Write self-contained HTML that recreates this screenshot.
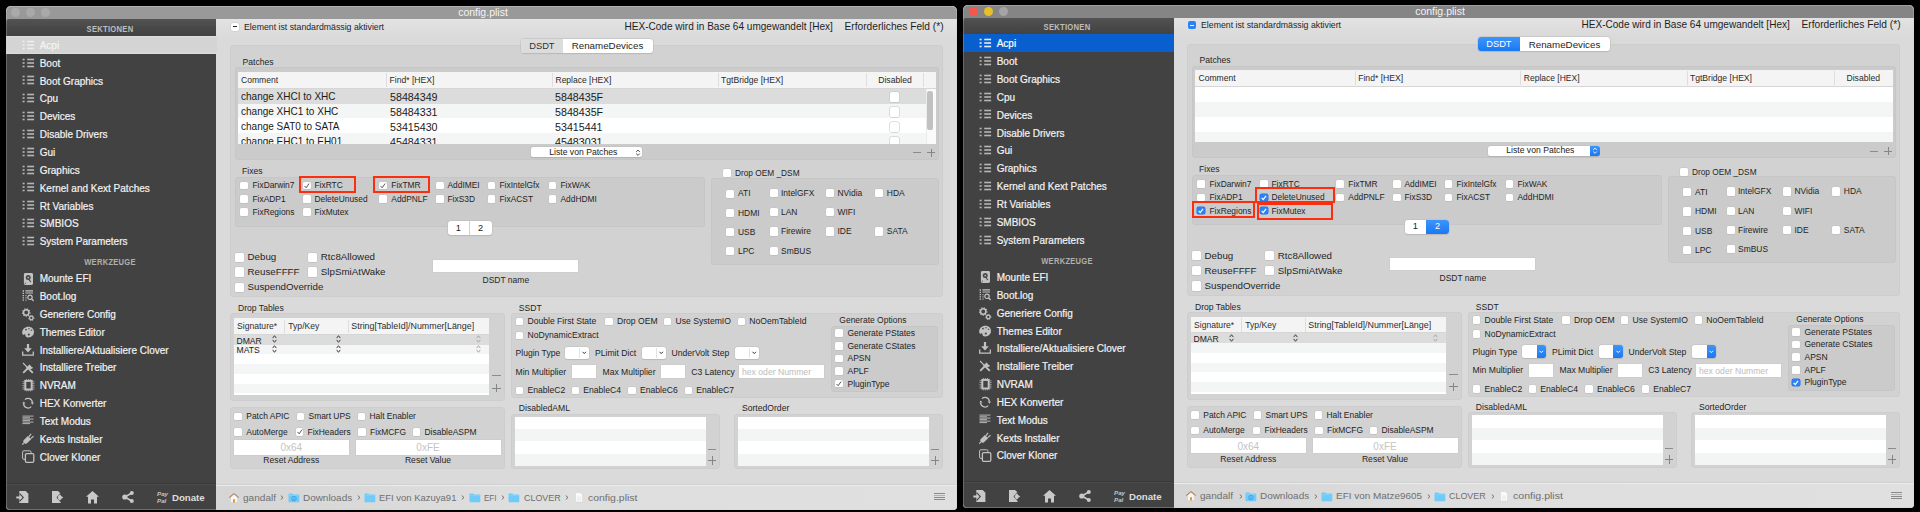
<!DOCTYPE html><html><head><meta charset="utf-8"><style>html,body{margin:0;padding:0;background:#000;width:1920px;height:512px;overflow:hidden;font-family:'Liberation Sans', sans-serif;} .w{position:absolute;left:0;top:0;width:1920px;height:512px;}</style></head><body>
<div class="w"><div style="position:absolute;left:6.00px;top:6.00px;width:951.00px;height:503.50px;background:#dadada;border-radius:5px 5px 4px 4px;"></div><div style="position:absolute;left:6.00px;top:6.00px;width:951.00px;height:18.00px;background:#999999;border-radius:5px 5px 0 0;box-shadow:inset 0 1px 0 rgba(255,255,255,0.22);"></div><div style="position:absolute;left:216.00px;top:19.20px;width:741.00px;height:18.80px;background:linear-gradient(#e3e3e3,#dadada);"></div><div style="position:absolute;left:11.00px;top:7.90px;width:9.20px;height:9.20px;background:#a9a9a9;border-radius:50%;"></div><div style="position:absolute;left:26.00px;top:7.90px;width:9.20px;height:9.20px;background:#a9a9a9;border-radius:50%;"></div><div style="position:absolute;left:41.00px;top:7.90px;width:9.20px;height:9.20px;background:#a9a9a9;border-radius:50%;"></div><div style="position:absolute;left:183.30px;width:600px;text-align:center;top:8.32px;font-size:10.4px;line-height:10.4px;color:#f4f4f4;font-weight:normal;white-space:pre;transform:scaleX(1.0115);transform-origin:50% 0;">config.plist</div><div style="position:absolute;left:6.00px;top:19.00px;width:210.00px;height:490.50px;background:linear-gradient(#535353 0px,#484848 9px,#424242 17px);border-radius:3px 0 0 4px;"></div><div style="position:absolute;left:-189.70px;width:600px;text-align:center;top:24.90px;font-size:8.4px;line-height:8.4px;color:#bdbdbd;font-weight:bold;white-space:pre;transform:scaleX(0.9090);transform-origin:50% 0;letter-spacing:0.3px;">SEKTIONEN</div><div style="position:absolute;left:6.00px;top:35.90px;width:210.50px;height:17.80px;background:#d4d4d4;border-top:1px solid #dedede;border-bottom:1px solid #dcdcdc;box-sizing:border-box;"></div><svg style="position:absolute;left:22.00px;top:39.65px;overflow:visible" width="13" height="9" viewBox="0 0 13 9"><rect x="0.6" y="0.70" width="2" height="1.6" fill="#ededed"/><rect x="5.2" y="0.70" width="6.9" height="1.6" fill="#ededed"/><rect x="0.6" y="4.20" width="2" height="1.6" fill="#ededed"/><rect x="5.2" y="4.20" width="6.9" height="1.6" fill="#ededed"/><rect x="0.6" y="7.70" width="2" height="1.6" fill="#ededed"/><rect x="5.2" y="7.70" width="6.9" height="1.6" fill="#ededed"/></svg><div style="position:absolute;left:39.70px;top:40.87px;font-size:10px;line-height:10px;color:#f4f4f4;font-weight:normal;white-space:pre;-webkit-text-stroke:0.2px #f4f4f4;">Acpi</div><svg style="position:absolute;left:22.00px;top:57.50px;overflow:visible" width="13" height="9" viewBox="0 0 13 9"><rect x="0.6" y="0.70" width="2" height="1.6" fill="#b6b6b6"/><rect x="5.2" y="0.70" width="6.9" height="1.6" fill="#b6b6b6"/><rect x="0.6" y="4.20" width="2" height="1.6" fill="#b6b6b6"/><rect x="5.2" y="4.20" width="6.9" height="1.6" fill="#b6b6b6"/><rect x="0.6" y="7.70" width="2" height="1.6" fill="#b6b6b6"/><rect x="5.2" y="7.70" width="6.9" height="1.6" fill="#b6b6b6"/></svg><div style="position:absolute;left:39.70px;top:58.72px;font-size:10px;line-height:10px;color:#f2f2f2;font-weight:normal;white-space:pre;-webkit-text-stroke:0.2px #f2f2f2;">Boot</div><svg style="position:absolute;left:22.00px;top:75.35px;overflow:visible" width="13" height="9" viewBox="0 0 13 9"><rect x="0.6" y="0.70" width="2" height="1.6" fill="#b6b6b6"/><rect x="5.2" y="0.70" width="6.9" height="1.6" fill="#b6b6b6"/><rect x="0.6" y="4.20" width="2" height="1.6" fill="#b6b6b6"/><rect x="5.2" y="4.20" width="6.9" height="1.6" fill="#b6b6b6"/><rect x="0.6" y="7.70" width="2" height="1.6" fill="#b6b6b6"/><rect x="5.2" y="7.70" width="6.9" height="1.6" fill="#b6b6b6"/></svg><div style="position:absolute;left:39.70px;top:76.56px;font-size:10px;line-height:10px;color:#f2f2f2;font-weight:normal;white-space:pre;-webkit-text-stroke:0.2px #f2f2f2;">Boot Graphics</div><svg style="position:absolute;left:22.00px;top:93.20px;overflow:visible" width="13" height="9" viewBox="0 0 13 9"><rect x="0.6" y="0.70" width="2" height="1.6" fill="#b6b6b6"/><rect x="5.2" y="0.70" width="6.9" height="1.6" fill="#b6b6b6"/><rect x="0.6" y="4.20" width="2" height="1.6" fill="#b6b6b6"/><rect x="5.2" y="4.20" width="6.9" height="1.6" fill="#b6b6b6"/><rect x="0.6" y="7.70" width="2" height="1.6" fill="#b6b6b6"/><rect x="5.2" y="7.70" width="6.9" height="1.6" fill="#b6b6b6"/></svg><div style="position:absolute;left:39.70px;top:94.42px;font-size:10px;line-height:10px;color:#f2f2f2;font-weight:normal;white-space:pre;-webkit-text-stroke:0.2px #f2f2f2;">Cpu</div><svg style="position:absolute;left:22.00px;top:111.05px;overflow:visible" width="13" height="9" viewBox="0 0 13 9"><rect x="0.6" y="0.70" width="2" height="1.6" fill="#b6b6b6"/><rect x="5.2" y="0.70" width="6.9" height="1.6" fill="#b6b6b6"/><rect x="0.6" y="4.20" width="2" height="1.6" fill="#b6b6b6"/><rect x="5.2" y="4.20" width="6.9" height="1.6" fill="#b6b6b6"/><rect x="0.6" y="7.70" width="2" height="1.6" fill="#b6b6b6"/><rect x="5.2" y="7.70" width="6.9" height="1.6" fill="#b6b6b6"/></svg><div style="position:absolute;left:39.70px;top:112.27px;font-size:10px;line-height:10px;color:#f2f2f2;font-weight:normal;white-space:pre;-webkit-text-stroke:0.2px #f2f2f2;">Devices</div><svg style="position:absolute;left:22.00px;top:128.90px;overflow:visible" width="13" height="9" viewBox="0 0 13 9"><rect x="0.6" y="0.70" width="2" height="1.6" fill="#b6b6b6"/><rect x="5.2" y="0.70" width="6.9" height="1.6" fill="#b6b6b6"/><rect x="0.6" y="4.20" width="2" height="1.6" fill="#b6b6b6"/><rect x="5.2" y="4.20" width="6.9" height="1.6" fill="#b6b6b6"/><rect x="0.6" y="7.70" width="2" height="1.6" fill="#b6b6b6"/><rect x="5.2" y="7.70" width="6.9" height="1.6" fill="#b6b6b6"/></svg><div style="position:absolute;left:39.70px;top:130.12px;font-size:10px;line-height:10px;color:#f2f2f2;font-weight:normal;white-space:pre;-webkit-text-stroke:0.2px #f2f2f2;">Disable Drivers</div><svg style="position:absolute;left:22.00px;top:146.75px;overflow:visible" width="13" height="9" viewBox="0 0 13 9"><rect x="0.6" y="0.70" width="2" height="1.6" fill="#b6b6b6"/><rect x="5.2" y="0.70" width="6.9" height="1.6" fill="#b6b6b6"/><rect x="0.6" y="4.20" width="2" height="1.6" fill="#b6b6b6"/><rect x="5.2" y="4.20" width="6.9" height="1.6" fill="#b6b6b6"/><rect x="0.6" y="7.70" width="2" height="1.6" fill="#b6b6b6"/><rect x="5.2" y="7.70" width="6.9" height="1.6" fill="#b6b6b6"/></svg><div style="position:absolute;left:39.70px;top:147.97px;font-size:10px;line-height:10px;color:#f2f2f2;font-weight:normal;white-space:pre;-webkit-text-stroke:0.2px #f2f2f2;">Gui</div><svg style="position:absolute;left:22.00px;top:164.60px;overflow:visible" width="13" height="9" viewBox="0 0 13 9"><rect x="0.6" y="0.70" width="2" height="1.6" fill="#b6b6b6"/><rect x="5.2" y="0.70" width="6.9" height="1.6" fill="#b6b6b6"/><rect x="0.6" y="4.20" width="2" height="1.6" fill="#b6b6b6"/><rect x="5.2" y="4.20" width="6.9" height="1.6" fill="#b6b6b6"/><rect x="0.6" y="7.70" width="2" height="1.6" fill="#b6b6b6"/><rect x="5.2" y="7.70" width="6.9" height="1.6" fill="#b6b6b6"/></svg><div style="position:absolute;left:39.70px;top:165.82px;font-size:10px;line-height:10px;color:#f2f2f2;font-weight:normal;white-space:pre;-webkit-text-stroke:0.2px #f2f2f2;">Graphics</div><svg style="position:absolute;left:22.00px;top:182.45px;overflow:visible" width="13" height="9" viewBox="0 0 13 9"><rect x="0.6" y="0.70" width="2" height="1.6" fill="#b6b6b6"/><rect x="5.2" y="0.70" width="6.9" height="1.6" fill="#b6b6b6"/><rect x="0.6" y="4.20" width="2" height="1.6" fill="#b6b6b6"/><rect x="5.2" y="4.20" width="6.9" height="1.6" fill="#b6b6b6"/><rect x="0.6" y="7.70" width="2" height="1.6" fill="#b6b6b6"/><rect x="5.2" y="7.70" width="6.9" height="1.6" fill="#b6b6b6"/></svg><div style="position:absolute;left:39.70px;top:183.67px;font-size:10px;line-height:10px;color:#f2f2f2;font-weight:normal;white-space:pre;-webkit-text-stroke:0.2px #f2f2f2;">Kernel and Kext Patches</div><svg style="position:absolute;left:22.00px;top:200.30px;overflow:visible" width="13" height="9" viewBox="0 0 13 9"><rect x="0.6" y="0.70" width="2" height="1.6" fill="#b6b6b6"/><rect x="5.2" y="0.70" width="6.9" height="1.6" fill="#b6b6b6"/><rect x="0.6" y="4.20" width="2" height="1.6" fill="#b6b6b6"/><rect x="5.2" y="4.20" width="6.9" height="1.6" fill="#b6b6b6"/><rect x="0.6" y="7.70" width="2" height="1.6" fill="#b6b6b6"/><rect x="5.2" y="7.70" width="6.9" height="1.6" fill="#b6b6b6"/></svg><div style="position:absolute;left:39.70px;top:201.52px;font-size:10px;line-height:10px;color:#f2f2f2;font-weight:normal;white-space:pre;-webkit-text-stroke:0.2px #f2f2f2;">Rt Variables</div><svg style="position:absolute;left:22.00px;top:218.15px;overflow:visible" width="13" height="9" viewBox="0 0 13 9"><rect x="0.6" y="0.70" width="2" height="1.6" fill="#b6b6b6"/><rect x="5.2" y="0.70" width="6.9" height="1.6" fill="#b6b6b6"/><rect x="0.6" y="4.20" width="2" height="1.6" fill="#b6b6b6"/><rect x="5.2" y="4.20" width="6.9" height="1.6" fill="#b6b6b6"/><rect x="0.6" y="7.70" width="2" height="1.6" fill="#b6b6b6"/><rect x="5.2" y="7.70" width="6.9" height="1.6" fill="#b6b6b6"/></svg><div style="position:absolute;left:39.70px;top:219.37px;font-size:10px;line-height:10px;color:#f2f2f2;font-weight:normal;white-space:pre;-webkit-text-stroke:0.2px #f2f2f2;">SMBIOS</div><svg style="position:absolute;left:22.00px;top:236.00px;overflow:visible" width="13" height="9" viewBox="0 0 13 9"><rect x="0.6" y="0.70" width="2" height="1.6" fill="#b6b6b6"/><rect x="5.2" y="0.70" width="6.9" height="1.6" fill="#b6b6b6"/><rect x="0.6" y="4.20" width="2" height="1.6" fill="#b6b6b6"/><rect x="5.2" y="4.20" width="6.9" height="1.6" fill="#b6b6b6"/><rect x="0.6" y="7.70" width="2" height="1.6" fill="#b6b6b6"/><rect x="5.2" y="7.70" width="6.9" height="1.6" fill="#b6b6b6"/></svg><div style="position:absolute;left:39.70px;top:237.22px;font-size:10px;line-height:10px;color:#f2f2f2;font-weight:normal;white-space:pre;-webkit-text-stroke:0.2px #f2f2f2;">System Parameters</div><div style="position:absolute;left:-189.70px;width:600px;text-align:center;top:258.10px;font-size:8.4px;line-height:8.4px;color:#b0b0b0;font-weight:bold;white-space:pre;transform:scaleX(0.9031);transform-origin:50% 0;letter-spacing:0.3px;">WERKZEUGE</div><svg style="position:absolute;left:22.00px;top:272.50px;overflow:visible" width="12" height="12" viewBox="0 0 12 12"><rect x="1.9" y="0" width="9.1" height="11.9" rx="1.4" fill="#c2c2c2"/><circle cx="6.2" cy="4.6" r="2.5" fill="#4a4a4a"/><circle cx="6.2" cy="4.6" r="0.8" fill="#c2c2c2"/><path d="M6.6 6L8.8 9" stroke="#4a4a4a" stroke-width="1.2"/><rect x="2.9" y="9.7" width="1" height="1" fill="#4a4a4a"/></svg><div style="position:absolute;left:39.70px;top:274.37px;font-size:10px;line-height:10px;color:#f2f2f2;font-weight:normal;white-space:pre;-webkit-text-stroke:0.2px #f2f2f2;">Mounte EFI</div><svg style="position:absolute;left:22.00px;top:290.32px;overflow:visible" width="12" height="12" viewBox="0 0 12 12"><path d="M0.6 1h1.4M0.6 3.3h1.4M0.6 5.6h1.4M0.6 7.9h1.4M0.6 10.2h1.4" stroke="#c2c2c2" stroke-width="1.3"/><path d="M3.4 0.9h7.6M3.4 3h7.6" stroke="#c2c2c2" stroke-width="1.1"/><path d="M3.5 5.6h1M3.5 7.9h1M3.5 10.2h1" stroke="#c2c2c2" stroke-width="1.2"/><circle cx="8" cy="7.3" r="2.2" fill="none" stroke="#c2c2c2" stroke-width="1.2"/><path d="M9.6 8.9L11.6 11" stroke="#c2c2c2" stroke-width="1.3"/></svg><div style="position:absolute;left:39.70px;top:292.19px;font-size:10px;line-height:10px;color:#f2f2f2;font-weight:normal;white-space:pre;-webkit-text-stroke:0.2px #f2f2f2;">Boot.log</div><svg style="position:absolute;left:22.00px;top:308.15px;overflow:visible" width="12" height="12" viewBox="0 0 12 12"><circle cx="4.2" cy="4.5" r="2.7" fill="none" stroke="#c2c2c2" stroke-width="1.5"/><circle cx="4.2" cy="4.5" r="3.7" fill="none" stroke="#c2c2c2" stroke-width="1.1" stroke-dasharray="1.2 1.3"/><circle cx="9.3" cy="10" r="1.8" fill="none" stroke="#c2c2c2" stroke-width="1.3"/><circle cx="9.3" cy="10" r="2.6" fill="none" stroke="#c2c2c2" stroke-width="0.9" stroke-dasharray="1.1 1.1"/></svg><div style="position:absolute;left:39.70px;top:310.01px;font-size:10px;line-height:10px;color:#f2f2f2;font-weight:normal;white-space:pre;-webkit-text-stroke:0.2px #f2f2f2;">Generiere Config</div><svg style="position:absolute;left:22.00px;top:325.98px;overflow:visible" width="12" height="12" viewBox="0 0 12 12"><path d="M6.5 0.8C3 0.8 0.2 3.2 0.2 6.4C0.2 8.6 1.2 9.2 2.2 8.6C3.2 8 3.3 8.6 3.4 9.6C3.6 11 4.8 11.6 6.3 11.5C9.6 11.3 12 9.1 12 6C12 3 9.6 0.8 6.5 0.8Z" fill="#c2c2c2"/><circle cx="4" cy="3.6" r="0.9" fill="#4a4a4a"/><circle cx="7" cy="2.8" r="0.8" fill="#5a5a5a"/><circle cx="9.5" cy="4.2" r="0.8" fill="#5a5a5a"/><circle cx="6.8" cy="8.6" r="1.1" fill="#4a4a4a"/></svg><div style="position:absolute;left:39.70px;top:327.84px;font-size:10px;line-height:10px;color:#f2f2f2;font-weight:normal;white-space:pre;-webkit-text-stroke:0.2px #f2f2f2;">Themes Editor</div><svg style="position:absolute;left:22.00px;top:343.80px;overflow:visible" width="12" height="12" viewBox="0 0 12 12"><path d="M4.9 0h2.2v4.3h2.7L6 8.4L2.2 4.3h2.7Z" fill="#c2c2c2"/><path d="M0.7 7.6v3.5h10.6v-3.5" fill="none" stroke="#c2c2c2" stroke-width="1.3"/></svg><div style="position:absolute;left:39.70px;top:345.67px;font-size:10px;line-height:10px;color:#f2f2f2;font-weight:normal;white-space:pre;-webkit-text-stroke:0.2px #f2f2f2;">Installiere/Aktualisiere Clover</div><svg style="position:absolute;left:22.00px;top:361.62px;overflow:visible" width="12" height="12" viewBox="0 0 12 12"><path d="M1 1L4.6 4.6" stroke="#c2c2c2" stroke-width="1.1"/><path d="M4.3 4.3L10.8 10.8" stroke="#c2c2c2" stroke-width="1.9"/><path d="M1.2 10.8L8 4" stroke="#c2c2c2" stroke-width="1.8"/><path d="M7.2 2.4A2.6 2.6 0 1 0 11.1 5.6L9.6 5L8.6 3.6Z" fill="#c2c2c2"/></svg><div style="position:absolute;left:39.70px;top:363.49px;font-size:10px;line-height:10px;color:#f2f2f2;font-weight:normal;white-space:pre;-webkit-text-stroke:0.2px #f2f2f2;">Installiere Treiber</div><svg style="position:absolute;left:22.00px;top:379.45px;overflow:visible" width="12" height="12" viewBox="0 0 12 12"><rect x="3.3" y="1.9" width="6.4" height="8.6" fill="none" stroke="#c2c2c2" stroke-width="2"/><path d="M0.5 2.8h2M0.5 4.6h2M0.5 6.4h2M0.5 8.2h2M0.5 10h2M10.5 2.8h2M10.5 4.6h2M10.5 6.4h2M10.5 8.2h2M10.5 10h2M4.5 0v1M6.5 0v1M8.5 0v1M4.5 11.4v1M6.5 11.4v1M8.5 11.4v1" stroke="#c2c2c2" stroke-width="0.7"/></svg><div style="position:absolute;left:39.70px;top:381.31px;font-size:10px;line-height:10px;color:#f2f2f2;font-weight:normal;white-space:pre;-webkit-text-stroke:0.2px #f2f2f2;">NVRAM</div><svg style="position:absolute;left:22.00px;top:397.27px;overflow:visible" width="12" height="12" viewBox="0 0 12 12"><path d="M10.4 5.5A4.4 4.4 0 0 0 3 2.6M1.6 6.6A4.4 4.4 0 0 0 9.2 9.6" fill="none" stroke="#c2c2c2" stroke-width="1.3"/><path d="M0.2 6.6h3.3L1.8 4.4Z M12 5.6h-3.3L10.4 7.8Z" fill="#c2c2c2"/></svg><div style="position:absolute;left:39.70px;top:399.14px;font-size:10px;line-height:10px;color:#f2f2f2;font-weight:normal;white-space:pre;-webkit-text-stroke:0.2px #f2f2f2;">HEX Konverter</div><svg style="position:absolute;left:22.00px;top:415.10px;overflow:visible" width="12" height="12" viewBox="0 0 12 12"><path d="M0.5 1.1h11M0.5 2.8h7.5M0.5 4.1h11M0.5 5.6h7.5M0.5 7.1h11M0.5 8.6h7.5" stroke="#c2c2c2" stroke-width="0.9"/></svg><div style="position:absolute;left:39.70px;top:416.97px;font-size:10px;line-height:10px;color:#f2f2f2;font-weight:normal;white-space:pre;-webkit-text-stroke:0.2px #f2f2f2;">Text Modus</div><svg style="position:absolute;left:22.00px;top:432.92px;overflow:visible" width="12" height="12" viewBox="0 0 12 12"><path d="M1.6 7.3C1 8.2 1.2 9.4 2 10.1C2.8 10.9 4.1 10.9 5 10.2L9.2 6.2L5.9 2.9Z" fill="#c2c2c2"/><path d="M6.8 3.8L9.1 0.9M8.6 5.6L11.5 3.3M1.8 10L0.3 11.7" stroke="#c2c2c2" stroke-width="1.2"/></svg><div style="position:absolute;left:39.70px;top:434.79px;font-size:10px;line-height:10px;color:#f2f2f2;font-weight:normal;white-space:pre;-webkit-text-stroke:0.2px #f2f2f2;">Kexts Installer</div><svg style="position:absolute;left:22.00px;top:450.75px;overflow:visible" width="12" height="12" viewBox="0 0 12 12"><rect x="0.6" y="-0.2" width="8.4" height="8.6" rx="1.3" fill="none" stroke="#c2c2c2" stroke-width="1"/><rect x="3.4" y="2.6" width="8.4" height="8.8" rx="1.3" fill="#424242" stroke="#c2c2c2" stroke-width="1.3"/></svg><div style="position:absolute;left:39.70px;top:452.62px;font-size:10px;line-height:10px;color:#f2f2f2;font-weight:normal;white-space:pre;-webkit-text-stroke:0.2px #f2f2f2;">Clover Kloner</div><div style="position:absolute;left:6.00px;top:482.60px;width:210.00px;height:1.00px;background:#393939;"></div><div style="position:absolute;left:6.00px;top:483.60px;width:210.00px;height:0.80px;background:#4a4a4a;"></div><svg style="position:absolute;left:15.50px;top:491.20px;overflow:visible" width="13" height="12.5" viewBox="0 0 13 12.5"><path d="M3.3 0H9.7L12.4 2.8V11.9H3.3Z" fill="#c9c9c9"/><path d="M3.6 2.6L7.2 6.5L3.6 10.4" stroke="#424242" stroke-width="1.2" fill="none"/><path d="M0.3 6.5H5.2" stroke="#c9c9c9" stroke-width="2"/><path d="M4.2 4.2L6.4 6.5L4.2 8.8Z" fill="#c9c9c9"/></svg><svg style="position:absolute;left:52.00px;top:491.20px;overflow:visible" width="12" height="12.5" viewBox="0 0 12 12.5"><path d="M0 0H6L8.6 2.6V11.9H0Z" fill="#c9c9c9"/><path d="M8.9 2.4L5.3 6.5L8.9 10.6" stroke="#424242" stroke-width="1.2" fill="none"/><path d="M7.2 3.4L11.2 6.5L7.2 9.6L5.6 6.5Z" fill="#c9c9c9"/></svg><svg style="position:absolute;left:86.30px;top:491.00px;overflow:visible" width="13" height="12.5" viewBox="0 0 13 12.5"><path d="M6.5 0L13 5.8h-2v6.7h-3v-4h-3v4h-3v-6.7h-2Z" fill="#c9c9c9"/></svg><svg style="position:absolute;left:122.00px;top:491.00px;overflow:visible" width="12" height="12" viewBox="0 0 12 12"><circle cx="2.8" cy="6" r="2.6" fill="#c9c9c9"/><circle cx="9.8" cy="2" r="2" fill="#c9c9c9"/><circle cx="9.8" cy="10" r="2" fill="#c9c9c9"/><path d="M2.8 6L9.8 2M2.8 6L9.8 10" stroke="#c9c9c9" stroke-width="1.5"/></svg><div style="position:absolute;left:157.00px;top:491.37px;font-size:6.2px;line-height:6.2px;color:#c4c4c4;font-weight:bold;white-space:pre;font-style:italic;">Pay</div><div style="position:absolute;left:157.00px;top:498.27px;font-size:6.2px;line-height:6.2px;color:#c4c4c4;font-weight:bold;white-space:pre;font-style:italic;">Pal</div><div style="position:absolute;left:171.90px;top:493.36px;font-size:9.7px;line-height:9.7px;color:#dedede;font-weight:bold;white-space:pre;">Donate</div><div style="position:absolute;left:231.00px;top:22.60px;width:8.40px;height:8.50px;background:#fff;border-radius:2px;box-shadow:0 0 0 0.5px #c8c8c8;"></div><div style="position:absolute;left:233.10px;top:26.40px;width:4.00px;height:1.10px;background:#222;"></div><div style="position:absolute;left:244.00px;top:23.03px;font-size:8.75px;line-height:8.75px;color:#1f1f1f;font-weight:normal;white-space:pre;">Element ist standardmässig aktiviert</div><div style="position:absolute;left:624.50px;top:21.69px;font-size:10.05px;line-height:10.05px;color:#1e1e1e;font-weight:normal;white-space:pre;">HEX-Code wird in Base 64 umgewandelt [Hex]</div><div style="position:absolute;left:844.50px;top:21.62px;font-size:10.2px;line-height:10.2px;color:#1e1e1e;font-weight:normal;white-space:pre;">Erforderliches Feld (*)</div><div style="position:absolute;left:230.00px;top:45.20px;width:712.50px;height:251.80px;background:#d2d2d2;border-radius:4px;box-shadow:inset 0 0 0 0.5px rgba(0,0,0,0.05);"></div><div style="position:absolute;left:520.50px;top:38.80px;width:132.00px;height:14.20px;background:#fff;border-radius:3px;box-shadow:0 0 0 0.5px #bdbdbd, 0 0.5px 1px rgba(0,0,0,0.15);"></div><div style="position:absolute;left:520.50px;top:38.80px;width:42.50px;height:14.20px;background:#dcdcdc;border-radius:3px 0 0 3px;"></div><div style="position:absolute;left:241.90px;width:600px;text-align:center;top:41.66px;font-size:9.3px;line-height:9.3px;color:#303030;font-weight:normal;white-space:pre;">DSDT</div><div style="position:absolute;left:307.50px;width:600px;text-align:center;top:41.44px;font-size:9.75px;line-height:9.75px;color:#262626;font-weight:normal;white-space:pre;">RenameDevices</div><div style="position:absolute;left:242.60px;top:57.80px;font-size:8.6px;line-height:8.6px;color:#1f1f1f;font-weight:normal;white-space:pre;">Patches</div><div style="position:absolute;left:234.50px;top:67.25px;width:704.25px;height:92.25px;background:#cbcbcb;border-radius:4px;box-shadow:inset 0 0 0 0.5px rgba(0,0,0,0.05);"></div><div style="position:absolute;left:238.25px;top:71.60px;width:697.25px;height:72.15px;background:#fff;"></div><div style="position:absolute;left:238.25px;top:71.60px;width:697.25px;height:17.20px;background:#f4f4f4;border-bottom:1px solid #d6d6d6;box-sizing:border-box;"></div><div style="position:absolute;left:386.00px;top:73.00px;width:1.00px;height:13.50px;background:#dedede;"></div><div style="position:absolute;left:552.00px;top:73.00px;width:1.00px;height:13.50px;background:#dedede;"></div><div style="position:absolute;left:717.50px;top:73.00px;width:1.00px;height:13.50px;background:#dedede;"></div><div style="position:absolute;left:865.75px;top:73.00px;width:1.00px;height:13.50px;background:#dedede;"></div><div style="position:absolute;left:923.00px;top:73.00px;width:1.00px;height:13.50px;background:#dedede;"></div><div style="position:absolute;left:241.00px;top:75.82px;font-size:8.55px;line-height:8.55px;color:#2a2a2a;font-weight:normal;white-space:pre;">Comment</div><div style="position:absolute;left:389.50px;top:75.80px;font-size:8.6px;line-height:8.6px;color:#2a2a2a;font-weight:normal;white-space:pre;">Find* [HEX]</div><div style="position:absolute;left:555.50px;top:75.85px;font-size:8.5px;line-height:8.5px;color:#2a2a2a;font-weight:normal;white-space:pre;">Replace [HEX]</div><div style="position:absolute;left:721.00px;top:75.80px;font-size:8.6px;line-height:8.6px;color:#2a2a2a;font-weight:normal;white-space:pre;">TgtBridge [HEX]</div><div style="position:absolute;left:595.00px;width:600px;text-align:center;top:75.77px;font-size:8.65px;line-height:8.65px;color:#2a2a2a;font-weight:normal;white-space:pre;">Disabled</div><div style="position:absolute;left:238.25px;top:88.80px;width:687.25px;height:14.85px;background:#dcdcdc;"></div><div style="position:absolute;left:238.25px;top:103.65px;width:687.25px;height:14.85px;background:#f4f5f5;"></div><div style="position:absolute;left:238.25px;top:118.50px;width:687.25px;height:14.85px;background:#ffffff;"></div><div style="position:absolute;left:238.25px;top:133.35px;width:687.25px;height:10.40px;background:#f4f5f5;"></div><div style="position:absolute;left:925.50px;top:88.80px;width:10.00px;height:54.95px;background:#fafafa;border-left:1px solid #ececec;box-sizing:border-box;"></div><div style="position:absolute;left:927.30px;top:91.40px;width:5.30px;height:38.30px;background:#c1c1c1;border-radius:2.6px;"></div><div style="position:absolute;left:240.60px;top:91.92px;font-size:10.4px;line-height:10.4px;color:#1a1a1a;font-weight:normal;white-space:pre;transform:scaleX(0.9630);transform-origin:0 0;">change XHCI to XHC</div><div style="position:absolute;left:389.50px;top:91.87px;font-size:10.5px;line-height:10.5px;color:#1a1a1a;font-weight:normal;white-space:pre;transform:scaleX(1.0170);transform-origin:0 0;">58484349</div><div style="position:absolute;left:555.20px;top:91.87px;font-size:10.5px;line-height:10.5px;color:#1a1a1a;font-weight:normal;white-space:pre;transform:scaleX(1.0170);transform-origin:0 0;">5848435F</div><div style="position:absolute;left:889.50px;top:92.25px;width:9.50px;height:9.50px;background:#ffffff;border-radius:1.5px;box-shadow:0 0 0 0.5px #c2c2c2, 0 0.5px 0.5px rgba(0,0,0,0.12);"></div><div style="position:absolute;left:240.60px;top:106.82px;font-size:10.4px;line-height:10.4px;color:#1a1a1a;font-weight:normal;white-space:pre;transform:scaleX(0.9630);transform-origin:0 0;">change XHC1 to XHC</div><div style="position:absolute;left:389.50px;top:106.77px;font-size:10.5px;line-height:10.5px;color:#1a1a1a;font-weight:normal;white-space:pre;transform:scaleX(1.0170);transform-origin:0 0;">58484331</div><div style="position:absolute;left:555.20px;top:106.77px;font-size:10.5px;line-height:10.5px;color:#1a1a1a;font-weight:normal;white-space:pre;transform:scaleX(1.0170);transform-origin:0 0;">5848435F</div><div style="position:absolute;left:889.50px;top:107.15px;width:9.50px;height:9.50px;background:#ffffff;border-radius:1.5px;box-shadow:0 0 0 0.5px #c2c2c2, 0 0.5px 0.5px rgba(0,0,0,0.12);"></div><div style="position:absolute;left:240.60px;top:121.72px;font-size:10.4px;line-height:10.4px;color:#1a1a1a;font-weight:normal;white-space:pre;transform:scaleX(0.9630);transform-origin:0 0;">change SAT0 to SATA</div><div style="position:absolute;left:389.50px;top:121.67px;font-size:10.5px;line-height:10.5px;color:#1a1a1a;font-weight:normal;white-space:pre;transform:scaleX(1.0170);transform-origin:0 0;">53415430</div><div style="position:absolute;left:555.20px;top:121.67px;font-size:10.5px;line-height:10.5px;color:#1a1a1a;font-weight:normal;white-space:pre;transform:scaleX(1.0170);transform-origin:0 0;">53415441</div><div style="position:absolute;left:889.50px;top:122.05px;width:9.50px;height:9.50px;background:#ffffff;border-radius:1.5px;box-shadow:0 0 0 0.5px #c2c2c2, 0 0.5px 0.5px rgba(0,0,0,0.12);"></div><div style="position:absolute;left:240.60px;top:136.62px;font-size:10.4px;line-height:10.4px;color:#1a1a1a;font-weight:normal;white-space:pre;transform:scaleX(0.9630);transform-origin:0 0;">change EHC1 to EH01</div><div style="position:absolute;left:389.50px;top:136.57px;font-size:10.5px;line-height:10.5px;color:#1a1a1a;font-weight:normal;white-space:pre;transform:scaleX(1.0170);transform-origin:0 0;">45484331</div><div style="position:absolute;left:555.20px;top:136.57px;font-size:10.5px;line-height:10.5px;color:#1a1a1a;font-weight:normal;white-space:pre;transform:scaleX(1.0170);transform-origin:0 0;">45483031</div><div style="position:absolute;left:889.50px;top:136.95px;width:9.50px;height:9.50px;background:#ffffff;border-radius:1.5px;box-shadow:0 0 0 0.5px #c2c2c2, 0 0.5px 0.5px rgba(0,0,0,0.12);"></div><div style="position:absolute;left:234.50px;top:143.75px;width:704.25px;height:3.25px;background:#cbcbcb;"></div><div style="position:absolute;left:530.80px;top:147.10px;width:111.70px;height:10.10px;background:#fff;border-radius:2.5px;box-shadow:0 0 0 0.5px #c0c0c0, 0 0.5px 0.8px rgba(0,0,0,0.18);"></div><svg style="position:absolute;left:634.50px;top:148.80px;overflow:visible" width="6" height="7.5" viewBox="0 0 6 7.5"><path d="M1.2 2.9L3 1.1L4.8 2.9M1.2 4.6L3 6.4L4.8 4.6" fill="none" stroke="#333" stroke-width="0.9"/></svg><div style="position:absolute;left:283.30px;width:600px;text-align:center;top:147.97px;font-size:8.65px;line-height:8.65px;color:#222;font-weight:normal;white-space:pre;">Liste von Patches</div><div style="position:absolute;left:913.00px;top:152.10px;width:8.00px;height:1.00px;background:#8c8c8c;"></div><div style="position:absolute;left:927.00px;top:152.10px;width:8.00px;height:1.00px;background:#858585;"></div><div style="position:absolute;left:930.50px;top:149.00px;width:1.00px;height:7.80px;background:#858585;"></div><div style="position:absolute;left:242.00px;top:167.00px;font-size:8.6px;line-height:8.6px;color:#1f1f1f;font-weight:normal;white-space:pre;">Fixes</div><div style="position:absolute;left:234.50px;top:177.00px;width:470.00px;height:49.75px;background:#cbcbcb;border-radius:4px;box-shadow:inset 0 0 0 0.5px rgba(0,0,0,0.05);"></div><div style="position:absolute;left:240.10px;top:181.50px;width:7.60px;height:7.60px;background:#ffffff;border-radius:1.5px;box-shadow:0 0 0 0.5px #c2c2c2, 0 0.5px 0.5px rgba(0,0,0,0.12);"></div><div style="position:absolute;left:252.50px;top:181.20px;font-size:8.4px;line-height:8.4px;color:#1f1f1f;font-weight:normal;white-space:pre;">FixDarwin7</div><div style="position:absolute;left:240.10px;top:195.00px;width:7.60px;height:7.60px;background:#ffffff;border-radius:1.5px;box-shadow:0 0 0 0.5px #c2c2c2, 0 0.5px 0.5px rgba(0,0,0,0.12);"></div><div style="position:absolute;left:252.50px;top:194.70px;font-size:8.4px;line-height:8.4px;color:#1f1f1f;font-weight:normal;white-space:pre;">FixADP1</div><div style="position:absolute;left:240.10px;top:208.30px;width:7.60px;height:7.60px;background:#ffffff;border-radius:1.5px;box-shadow:0 0 0 0.5px #c2c2c2, 0 0.5px 0.5px rgba(0,0,0,0.12);"></div><div style="position:absolute;left:252.50px;top:208.00px;font-size:8.4px;line-height:8.4px;color:#1f1f1f;font-weight:normal;white-space:pre;">FixRegions</div><div style="position:absolute;left:303.30px;top:181.50px;width:7.60px;height:7.60px;background:#ffffff;border-radius:1.5px;box-shadow:0 0 0 0.5px #c2c2c2, 0 0.5px 0.5px rgba(0,0,0,0.12);"></div><svg style="position:absolute;left:303.30px;top:181.50px;overflow:visible" width="7.6" height="7.6" viewBox="0 0 7.6 7.6"><path d="M1.52 3.95L3.19 5.78L6.08 1.52" fill="none" stroke="#3a3a3a" stroke-width="0.85"/></svg><div style="position:absolute;left:314.50px;top:181.20px;font-size:8.4px;line-height:8.4px;color:#1f1f1f;font-weight:normal;white-space:pre;">FixRTC</div><div style="position:absolute;left:303.30px;top:195.00px;width:7.60px;height:7.60px;background:#ffffff;border-radius:1.5px;box-shadow:0 0 0 0.5px #c2c2c2, 0 0.5px 0.5px rgba(0,0,0,0.12);"></div><div style="position:absolute;left:314.50px;top:194.70px;font-size:8.4px;line-height:8.4px;color:#1f1f1f;font-weight:normal;white-space:pre;">DeleteUnused</div><div style="position:absolute;left:303.30px;top:208.30px;width:7.60px;height:7.60px;background:#ffffff;border-radius:1.5px;box-shadow:0 0 0 0.5px #c2c2c2, 0 0.5px 0.5px rgba(0,0,0,0.12);"></div><div style="position:absolute;left:314.50px;top:208.00px;font-size:8.4px;line-height:8.4px;color:#1f1f1f;font-weight:normal;white-space:pre;">FixMutex</div><div style="position:absolute;left:379.30px;top:181.50px;width:7.60px;height:7.60px;background:#ffffff;border-radius:1.5px;box-shadow:0 0 0 0.5px #c2c2c2, 0 0.5px 0.5px rgba(0,0,0,0.12);"></div><svg style="position:absolute;left:379.30px;top:181.50px;overflow:visible" width="7.6" height="7.6" viewBox="0 0 7.6 7.6"><path d="M1.52 3.95L3.19 5.78L6.08 1.52" fill="none" stroke="#3a3a3a" stroke-width="0.85"/></svg><div style="position:absolute;left:391.30px;top:181.20px;font-size:8.4px;line-height:8.4px;color:#1f1f1f;font-weight:normal;white-space:pre;">FixTMR</div><div style="position:absolute;left:379.30px;top:195.00px;width:7.60px;height:7.60px;background:#ffffff;border-radius:1.5px;box-shadow:0 0 0 0.5px #c2c2c2, 0 0.5px 0.5px rgba(0,0,0,0.12);"></div><div style="position:absolute;left:391.30px;top:194.70px;font-size:8.4px;line-height:8.4px;color:#1f1f1f;font-weight:normal;white-space:pre;">AddPNLF</div><div style="position:absolute;left:436.30px;top:181.50px;width:7.60px;height:7.60px;background:#ffffff;border-radius:1.5px;box-shadow:0 0 0 0.5px #c2c2c2, 0 0.5px 0.5px rgba(0,0,0,0.12);"></div><div style="position:absolute;left:447.50px;top:181.20px;font-size:8.4px;line-height:8.4px;color:#1f1f1f;font-weight:normal;white-space:pre;">AddIMEI</div><div style="position:absolute;left:436.30px;top:195.00px;width:7.60px;height:7.60px;background:#ffffff;border-radius:1.5px;box-shadow:0 0 0 0.5px #c2c2c2, 0 0.5px 0.5px rgba(0,0,0,0.12);"></div><div style="position:absolute;left:447.50px;top:194.70px;font-size:8.4px;line-height:8.4px;color:#1f1f1f;font-weight:normal;white-space:pre;">FixS3D</div><div style="position:absolute;left:487.50px;top:181.50px;width:7.60px;height:7.60px;background:#ffffff;border-radius:1.5px;box-shadow:0 0 0 0.5px #c2c2c2, 0 0.5px 0.5px rgba(0,0,0,0.12);"></div><div style="position:absolute;left:499.50px;top:181.20px;font-size:8.4px;line-height:8.4px;color:#1f1f1f;font-weight:normal;white-space:pre;">FixIntelGfx</div><div style="position:absolute;left:487.50px;top:195.00px;width:7.60px;height:7.60px;background:#ffffff;border-radius:1.5px;box-shadow:0 0 0 0.5px #c2c2c2, 0 0.5px 0.5px rgba(0,0,0,0.12);"></div><div style="position:absolute;left:499.50px;top:194.70px;font-size:8.4px;line-height:8.4px;color:#1f1f1f;font-weight:normal;white-space:pre;">FixACST</div><div style="position:absolute;left:548.80px;top:181.50px;width:7.60px;height:7.60px;background:#ffffff;border-radius:1.5px;box-shadow:0 0 0 0.5px #c2c2c2, 0 0.5px 0.5px rgba(0,0,0,0.12);"></div><div style="position:absolute;left:560.50px;top:181.20px;font-size:8.4px;line-height:8.4px;color:#1f1f1f;font-weight:normal;white-space:pre;">FixWAK</div><div style="position:absolute;left:548.80px;top:195.00px;width:7.60px;height:7.60px;background:#ffffff;border-radius:1.5px;box-shadow:0 0 0 0.5px #c2c2c2, 0 0.5px 0.5px rgba(0,0,0,0.12);"></div><div style="position:absolute;left:560.50px;top:194.70px;font-size:8.4px;line-height:8.4px;color:#1f1f1f;font-weight:normal;white-space:pre;">AddHDMI</div><div style="position:absolute;left:299.20px;top:176.30px;width:56.40px;height:16.90px;border:2px solid #fb2e10;box-sizing:border-box;"></div><div style="position:absolute;left:373.00px;top:176.30px;width:57.20px;height:16.90px;border:2px solid #fb2e10;box-sizing:border-box;"></div><div style="position:absolute;left:448.00px;top:221.00px;width:44.00px;height:14.20px;background:#fff;border-radius:3px;box-shadow:0 0 0 0.5px #bdbdbd, 0 0.5px 1px rgba(0,0,0,0.15);"></div><div style="position:absolute;left:468.50px;top:221.00px;width:0.70px;height:14.20px;background:#d0d0d0;"></div><div style="position:absolute;left:180.50px;width:600px;text-align:center;top:223.81px;font-size:9.2px;line-height:9.2px;color:#222;font-weight:normal;white-space:pre;">2</div><div style="position:absolute;left:158.40px;width:600px;text-align:center;top:223.81px;font-size:9.2px;line-height:9.2px;color:#222;font-weight:normal;white-space:pre;">1</div><div style="position:absolute;left:711.00px;top:177.50px;width:227.75px;height:87.25px;background:#cbcbcb;border-radius:4px;box-shadow:inset 0 0 0 0.5px rgba(0,0,0,0.05);"></div><div style="position:absolute;left:723.00px;top:169.10px;width:8.20px;height:8.20px;background:#ffffff;border-radius:1.5px;box-shadow:0 0 0 0.5px #c2c2c2, 0 0.5px 0.5px rgba(0,0,0,0.12);"></div><div style="position:absolute;left:735.00px;top:169.15px;font-size:8.3px;line-height:8.3px;color:#1f1f1f;font-weight:normal;white-space:pre;">Drop OEM _DSM</div><div style="position:absolute;left:726.20px;top:189.50px;width:8.20px;height:8.20px;background:#ffffff;border-radius:1.5px;box-shadow:0 0 0 0.5px #c2c2c2, 0 0.5px 0.5px rgba(0,0,0,0.12);"></div><div style="position:absolute;left:738.00px;top:189.47px;font-size:8.45px;line-height:8.45px;color:#1f1f1f;font-weight:normal;white-space:pre;">ATI</div><div style="position:absolute;left:726.20px;top:208.80px;width:8.20px;height:8.20px;background:#ffffff;border-radius:1.5px;box-shadow:0 0 0 0.5px #c2c2c2, 0 0.5px 0.5px rgba(0,0,0,0.12);"></div><div style="position:absolute;left:738.00px;top:208.77px;font-size:8.45px;line-height:8.45px;color:#1f1f1f;font-weight:normal;white-space:pre;">HDMI</div><div style="position:absolute;left:726.20px;top:228.00px;width:8.20px;height:8.20px;background:#ffffff;border-radius:1.5px;box-shadow:0 0 0 0.5px #c2c2c2, 0 0.5px 0.5px rgba(0,0,0,0.12);"></div><div style="position:absolute;left:738.00px;top:227.97px;font-size:8.45px;line-height:8.45px;color:#1f1f1f;font-weight:normal;white-space:pre;">USB</div><div style="position:absolute;left:726.20px;top:247.30px;width:8.20px;height:8.20px;background:#ffffff;border-radius:1.5px;box-shadow:0 0 0 0.5px #c2c2c2, 0 0.5px 0.5px rgba(0,0,0,0.12);"></div><div style="position:absolute;left:738.00px;top:247.27px;font-size:8.45px;line-height:8.45px;color:#1f1f1f;font-weight:normal;white-space:pre;">LPC</div><div style="position:absolute;left:769.60px;top:188.90px;width:8.20px;height:8.20px;background:#ffffff;border-radius:1.5px;box-shadow:0 0 0 0.5px #c2c2c2, 0 0.5px 0.5px rgba(0,0,0,0.12);"></div><div style="position:absolute;left:781.00px;top:188.87px;font-size:8.45px;line-height:8.45px;color:#1f1f1f;font-weight:normal;white-space:pre;">IntelGFX</div><div style="position:absolute;left:769.60px;top:208.20px;width:8.20px;height:8.20px;background:#ffffff;border-radius:1.5px;box-shadow:0 0 0 0.5px #c2c2c2, 0 0.5px 0.5px rgba(0,0,0,0.12);"></div><div style="position:absolute;left:781.00px;top:208.17px;font-size:8.45px;line-height:8.45px;color:#1f1f1f;font-weight:normal;white-space:pre;">LAN</div><div style="position:absolute;left:769.60px;top:227.40px;width:8.20px;height:8.20px;background:#ffffff;border-radius:1.5px;box-shadow:0 0 0 0.5px #c2c2c2, 0 0.5px 0.5px rgba(0,0,0,0.12);"></div><div style="position:absolute;left:781.00px;top:227.37px;font-size:8.45px;line-height:8.45px;color:#1f1f1f;font-weight:normal;white-space:pre;">Firewire</div><div style="position:absolute;left:769.60px;top:246.70px;width:8.20px;height:8.20px;background:#ffffff;border-radius:1.5px;box-shadow:0 0 0 0.5px #c2c2c2, 0 0.5px 0.5px rgba(0,0,0,0.12);"></div><div style="position:absolute;left:781.00px;top:246.67px;font-size:8.45px;line-height:8.45px;color:#1f1f1f;font-weight:normal;white-space:pre;">SmBUS</div><div style="position:absolute;left:826.00px;top:188.90px;width:8.20px;height:8.20px;background:#ffffff;border-radius:1.5px;box-shadow:0 0 0 0.5px #c2c2c2, 0 0.5px 0.5px rgba(0,0,0,0.12);"></div><div style="position:absolute;left:837.50px;top:188.87px;font-size:8.45px;line-height:8.45px;color:#1f1f1f;font-weight:normal;white-space:pre;">NVidia</div><div style="position:absolute;left:826.00px;top:208.20px;width:8.20px;height:8.20px;background:#ffffff;border-radius:1.5px;box-shadow:0 0 0 0.5px #c2c2c2, 0 0.5px 0.5px rgba(0,0,0,0.12);"></div><div style="position:absolute;left:837.50px;top:208.17px;font-size:8.45px;line-height:8.45px;color:#1f1f1f;font-weight:normal;white-space:pre;">WIFI</div><div style="position:absolute;left:826.00px;top:227.40px;width:8.20px;height:8.20px;background:#ffffff;border-radius:1.5px;box-shadow:0 0 0 0.5px #c2c2c2, 0 0.5px 0.5px rgba(0,0,0,0.12);"></div><div style="position:absolute;left:837.50px;top:227.37px;font-size:8.45px;line-height:8.45px;color:#1f1f1f;font-weight:normal;white-space:pre;">IDE</div><div style="position:absolute;left:875.00px;top:188.90px;width:8.20px;height:8.20px;background:#ffffff;border-radius:1.5px;box-shadow:0 0 0 0.5px #c2c2c2, 0 0.5px 0.5px rgba(0,0,0,0.12);"></div><div style="position:absolute;left:886.80px;top:188.87px;font-size:8.45px;line-height:8.45px;color:#1f1f1f;font-weight:normal;white-space:pre;">HDA</div><div style="position:absolute;left:875.00px;top:227.40px;width:8.20px;height:8.20px;background:#ffffff;border-radius:1.5px;box-shadow:0 0 0 0.5px #c2c2c2, 0 0.5px 0.5px rgba(0,0,0,0.12);"></div><div style="position:absolute;left:886.80px;top:227.37px;font-size:8.45px;line-height:8.45px;color:#1f1f1f;font-weight:normal;white-space:pre;">SATA</div><div style="position:absolute;left:234.80px;top:252.50px;width:9.40px;height:9.40px;background:#ffffff;border-radius:1.5px;box-shadow:0 0 0 0.5px #c2c2c2, 0 0.5px 0.5px rgba(0,0,0,0.12);"></div><div style="position:absolute;left:247.50px;top:252.44px;font-size:9.75px;line-height:9.75px;color:#262626;font-weight:normal;white-space:pre;">Debug</div><div style="position:absolute;left:308.00px;top:252.50px;width:9.40px;height:9.40px;background:#ffffff;border-radius:1.5px;box-shadow:0 0 0 0.5px #c2c2c2, 0 0.5px 0.5px rgba(0,0,0,0.12);"></div><div style="position:absolute;left:320.80px;top:252.44px;font-size:9.75px;line-height:9.75px;color:#262626;font-weight:normal;white-space:pre;">Rtc8Allowed</div><div style="position:absolute;left:234.80px;top:267.40px;width:9.40px;height:9.40px;background:#ffffff;border-radius:1.5px;box-shadow:0 0 0 0.5px #c2c2c2, 0 0.5px 0.5px rgba(0,0,0,0.12);"></div><div style="position:absolute;left:247.50px;top:267.34px;font-size:9.75px;line-height:9.75px;color:#262626;font-weight:normal;white-space:pre;">ReuseFFFF</div><div style="position:absolute;left:308.00px;top:267.40px;width:9.40px;height:9.40px;background:#ffffff;border-radius:1.5px;box-shadow:0 0 0 0.5px #c2c2c2, 0 0.5px 0.5px rgba(0,0,0,0.12);"></div><div style="position:absolute;left:320.80px;top:267.34px;font-size:9.75px;line-height:9.75px;color:#262626;font-weight:normal;white-space:pre;">SlpSmiAtWake</div><div style="position:absolute;left:234.80px;top:282.50px;width:9.40px;height:9.40px;background:#ffffff;border-radius:1.5px;box-shadow:0 0 0 0.5px #c2c2c2, 0 0.5px 0.5px rgba(0,0,0,0.12);"></div><div style="position:absolute;left:247.50px;top:282.44px;font-size:9.75px;line-height:9.75px;color:#262626;font-weight:normal;white-space:pre;">SuspendOverride</div><div style="position:absolute;left:432.50px;top:259.80px;width:145.50px;height:12.00px;background:#fff;box-shadow:0 0 0 0.5px #c8c8c8;"></div><div style="position:absolute;left:482.50px;top:275.65px;font-size:8.5px;line-height:8.5px;color:#262626;font-weight:normal;white-space:pre;">DSDT name</div><div style="position:absolute;left:238.00px;top:304.00px;font-size:8.6px;line-height:8.6px;color:#1f1f1f;font-weight:normal;white-space:pre;">Drop Tables</div><div style="position:absolute;left:230.00px;top:313.20px;width:274.50px;height:87.80px;background:#d2d2d2;border-radius:4px;box-shadow:inset 0 0 0 0.5px rgba(0,0,0,0.05);"></div><div style="position:absolute;left:233.75px;top:318.00px;width:255.50px;height:77.30px;background:#fff;"></div><div style="position:absolute;left:233.75px;top:318.00px;width:255.50px;height:16.75px;background:#f4f4f4;border-bottom:1px solid #d6d6d6;box-sizing:border-box;"></div><div style="position:absolute;left:284.25px;top:319.50px;width:1.00px;height:13.50px;background:#dedede;"></div><div style="position:absolute;left:348.25px;top:319.50px;width:1.00px;height:13.50px;background:#dedede;"></div><div style="position:absolute;left:237.00px;top:322.10px;font-size:8.6px;line-height:8.6px;color:#2e2e2e;font-weight:normal;white-space:pre;">Signature*</div><div style="position:absolute;left:288.30px;top:322.10px;font-size:8.6px;line-height:8.6px;color:#2e2e2e;font-weight:normal;white-space:pre;">Typ/Key</div><div style="position:absolute;left:351.30px;top:321.95px;font-size:8.9px;line-height:8.9px;color:#2e2e2e;font-weight:normal;white-space:pre;">String[TableId]/Nummer[Länge]</div><div style="position:absolute;left:233.75px;top:334.75px;width:255.50px;height:9.75px;background:#dcdcdc;"></div><div style="position:absolute;left:233.75px;top:344.50px;width:255.50px;height:9.75px;background:#f4f5f5;"></div><div style="position:absolute;left:233.75px;top:354.25px;width:255.50px;height:9.75px;background:#ffffff;"></div><div style="position:absolute;left:233.75px;top:364.00px;width:255.50px;height:9.75px;background:#f4f5f5;"></div><div style="position:absolute;left:233.75px;top:373.75px;width:255.50px;height:9.75px;background:#ffffff;"></div><div style="position:absolute;left:233.75px;top:383.50px;width:255.50px;height:9.75px;background:#f4f5f5;"></div><div style="position:absolute;left:236.50px;top:336.50px;font-size:8.6px;line-height:8.6px;color:#1c1c1c;font-weight:normal;white-space:pre;">DMAR</div><svg style="position:absolute;left:272.00px;top:335.30px;overflow:visible" width="5" height="8.4" viewBox="0 0 5 8.4"><path d="M0.7 3.1L2.5 0.7L4.3 3.1M0.7 4.9L2.5 7.3L4.3 4.9" fill="none" stroke="#3c3c3c" stroke-width="1"/></svg><svg style="position:absolute;left:336.30px;top:335.30px;overflow:visible" width="5" height="8.4" viewBox="0 0 5 8.4"><path d="M0.7 3.1L2.5 0.7L4.3 3.1M0.7 4.9L2.5 7.3L4.3 4.9" fill="none" stroke="#3c3c3c" stroke-width="1"/></svg><svg style="position:absolute;left:476.00px;top:335.30px;overflow:visible" width="5" height="8.4" viewBox="0 0 5 8.4"><path d="M0.7 3.1L2.5 0.7L4.3 3.1M0.7 4.9L2.5 7.3L4.3 4.9" fill="none" stroke="#a8a8a8" stroke-width="1"/></svg><div style="position:absolute;left:236.50px;top:346.25px;font-size:8.6px;line-height:8.6px;color:#1c1c1c;font-weight:normal;white-space:pre;">MATS</div><svg style="position:absolute;left:272.00px;top:345.05px;overflow:visible" width="5" height="8.4" viewBox="0 0 5 8.4"><path d="M0.7 3.1L2.5 0.7L4.3 3.1M0.7 4.9L2.5 7.3L4.3 4.9" fill="none" stroke="#3c3c3c" stroke-width="1"/></svg><svg style="position:absolute;left:336.30px;top:345.05px;overflow:visible" width="5" height="8.4" viewBox="0 0 5 8.4"><path d="M0.7 3.1L2.5 0.7L4.3 3.1M0.7 4.9L2.5 7.3L4.3 4.9" fill="none" stroke="#3c3c3c" stroke-width="1"/></svg><svg style="position:absolute;left:476.00px;top:345.05px;overflow:visible" width="5" height="8.4" viewBox="0 0 5 8.4"><path d="M0.7 3.1L2.5 0.7L4.3 3.1M0.7 4.9L2.5 7.3L4.3 4.9" fill="none" stroke="#a8a8a8" stroke-width="1"/></svg><div style="position:absolute;left:492.30px;top:374.90px;width:8.60px;height:1.00px;background:#8c8c8c;"></div><div style="position:absolute;left:492.30px;top:387.70px;width:8.60px;height:1.00px;background:#858585;"></div><div style="position:absolute;left:496.10px;top:384.20px;width:1.00px;height:7.80px;background:#858585;"></div><div style="position:absolute;left:518.80px;top:304.00px;font-size:8.6px;line-height:8.6px;color:#1f1f1f;font-weight:normal;white-space:pre;">SSDT</div><div style="position:absolute;left:511.25px;top:313.20px;width:431.25px;height:84.55px;background:#d2d2d2;border-radius:4px;box-shadow:inset 0 0 0 0.5px rgba(0,0,0,0.05);"></div><div style="position:absolute;left:515.80px;top:317.50px;width:7.60px;height:7.60px;background:#ffffff;border-radius:1.5px;box-shadow:0 0 0 0.5px #c2c2c2, 0 0.5px 0.5px rgba(0,0,0,0.12);"></div><div style="position:absolute;left:527.50px;top:317.10px;font-size:8.6px;line-height:8.6px;color:#1f1f1f;font-weight:normal;white-space:pre;">Double First State</div><div style="position:absolute;left:605.00px;top:317.50px;width:7.60px;height:7.60px;background:#ffffff;border-radius:1.5px;box-shadow:0 0 0 0.5px #c2c2c2, 0 0.5px 0.5px rgba(0,0,0,0.12);"></div><div style="position:absolute;left:617.00px;top:317.10px;font-size:8.6px;line-height:8.6px;color:#1f1f1f;font-weight:normal;white-space:pre;">Drop OEM</div><div style="position:absolute;left:663.80px;top:317.50px;width:7.60px;height:7.60px;background:#ffffff;border-radius:1.5px;box-shadow:0 0 0 0.5px #c2c2c2, 0 0.5px 0.5px rgba(0,0,0,0.12);"></div><div style="position:absolute;left:675.50px;top:317.10px;font-size:8.6px;line-height:8.6px;color:#1f1f1f;font-weight:normal;white-space:pre;">Use SystemIO</div><div style="position:absolute;left:737.50px;top:317.50px;width:7.60px;height:7.60px;background:#ffffff;border-radius:1.5px;box-shadow:0 0 0 0.5px #c2c2c2, 0 0.5px 0.5px rgba(0,0,0,0.12);"></div><div style="position:absolute;left:749.30px;top:317.10px;font-size:8.6px;line-height:8.6px;color:#1f1f1f;font-weight:normal;white-space:pre;">NoOemTableId</div><div style="position:absolute;left:515.80px;top:331.80px;width:7.60px;height:7.60px;background:#ffffff;border-radius:1.5px;box-shadow:0 0 0 0.5px #c2c2c2, 0 0.5px 0.5px rgba(0,0,0,0.12);"></div><div style="position:absolute;left:527.50px;top:331.40px;font-size:8.6px;line-height:8.6px;color:#1f1f1f;font-weight:normal;white-space:pre;">NoDynamicExtract</div><div style="position:absolute;left:515.50px;top:349.00px;font-size:8.6px;line-height:8.6px;color:#1f1f1f;font-weight:normal;white-space:pre;">Plugin Type</div><div style="position:absolute;left:564.50px;top:346.50px;width:24.80px;height:12.50px;background:#fff;border-radius:2.5px;box-shadow:0 0 0 0.5px #c0c0c0, 0 0.5px 0.8px rgba(0,0,0,0.15);"></div><div style="position:absolute;left:579.30px;top:347.50px;width:0.50px;height:10.50px;background:#e2e2e2;"></div><svg style="position:absolute;left:581.30px;top:350.00px;overflow:visible" width="6.5" height="6" viewBox="0 0 6.5 6"><path d="M1.5 1.8L3.25 3.6L5 1.8" fill="none" stroke="#333" stroke-width="1"/></svg><div style="position:absolute;left:595.00px;top:349.00px;font-size:8.6px;line-height:8.6px;color:#1f1f1f;font-weight:normal;white-space:pre;">PLimit Dict</div><div style="position:absolute;left:641.50px;top:346.50px;width:24.00px;height:12.50px;background:#fff;border-radius:2.5px;box-shadow:0 0 0 0.5px #c0c0c0, 0 0.5px 0.8px rgba(0,0,0,0.15);"></div><div style="position:absolute;left:655.50px;top:347.50px;width:0.50px;height:10.50px;background:#e2e2e2;"></div><svg style="position:absolute;left:657.50px;top:350.00px;overflow:visible" width="6.5" height="6" viewBox="0 0 6.5 6"><path d="M1.5 1.8L3.25 3.6L5 1.8" fill="none" stroke="#333" stroke-width="1"/></svg><div style="position:absolute;left:671.50px;top:349.00px;font-size:8.6px;line-height:8.6px;color:#1f1f1f;font-weight:normal;white-space:pre;">UnderVolt Step</div><div style="position:absolute;left:734.50px;top:346.50px;width:24.80px;height:12.50px;background:#fff;border-radius:2.5px;box-shadow:0 0 0 0.5px #c0c0c0, 0 0.5px 0.8px rgba(0,0,0,0.15);"></div><div style="position:absolute;left:749.30px;top:347.50px;width:0.50px;height:10.50px;background:#e2e2e2;"></div><svg style="position:absolute;left:751.30px;top:350.00px;overflow:visible" width="6.5" height="6" viewBox="0 0 6.5 6"><path d="M1.5 1.8L3.25 3.6L5 1.8" fill="none" stroke="#333" stroke-width="1"/></svg><div style="position:absolute;left:515.50px;top:367.60px;font-size:8.6px;line-height:8.6px;color:#1f1f1f;font-weight:normal;white-space:pre;">Min Multiplier</div><div style="position:absolute;left:571.50px;top:365.30px;width:24.00px;height:13.20px;background:#fff;box-shadow:0 0 0 0.5px #c8c8c8;"></div><div style="position:absolute;left:602.50px;top:367.60px;font-size:8.6px;line-height:8.6px;color:#1f1f1f;font-weight:normal;white-space:pre;">Max Multiplier</div><div style="position:absolute;left:660.50px;top:365.30px;width:24.50px;height:13.20px;background:#fff;box-shadow:0 0 0 0.5px #c8c8c8;"></div><div style="position:absolute;left:691.30px;top:367.60px;font-size:8.6px;line-height:8.6px;color:#1f1f1f;font-weight:normal;white-space:pre;">C3 Latency</div><div style="position:absolute;left:739.30px;top:365.30px;width:85.20px;height:13.20px;background:#fff;box-shadow:0 0 0 0.5px #c8c8c8;"></div><div style="position:absolute;left:742.00px;top:367.97px;font-size:8.65px;line-height:8.65px;color:#bdbdbd;font-weight:normal;white-space:pre;">hex oder Nummer</div><div style="position:absolute;left:515.80px;top:386.50px;width:7.60px;height:7.60px;background:#ffffff;border-radius:1.5px;box-shadow:0 0 0 0.5px #c2c2c2, 0 0.5px 0.5px rgba(0,0,0,0.12);"></div><div style="position:absolute;left:527.50px;top:386.10px;font-size:8.6px;line-height:8.6px;color:#1f1f1f;font-weight:normal;white-space:pre;">EnableC2</div><div style="position:absolute;left:571.50px;top:386.50px;width:7.60px;height:7.60px;background:#ffffff;border-radius:1.5px;box-shadow:0 0 0 0.5px #c2c2c2, 0 0.5px 0.5px rgba(0,0,0,0.12);"></div><div style="position:absolute;left:583.30px;top:386.10px;font-size:8.6px;line-height:8.6px;color:#1f1f1f;font-weight:normal;white-space:pre;">EnableC4</div><div style="position:absolute;left:628.00px;top:386.50px;width:7.60px;height:7.60px;background:#ffffff;border-radius:1.5px;box-shadow:0 0 0 0.5px #c2c2c2, 0 0.5px 0.5px rgba(0,0,0,0.12);"></div><div style="position:absolute;left:640.00px;top:386.10px;font-size:8.6px;line-height:8.6px;color:#1f1f1f;font-weight:normal;white-space:pre;">EnableC6</div><div style="position:absolute;left:684.50px;top:386.50px;width:7.60px;height:7.60px;background:#ffffff;border-radius:1.5px;box-shadow:0 0 0 0.5px #c2c2c2, 0 0.5px 0.5px rgba(0,0,0,0.12);"></div><div style="position:absolute;left:696.30px;top:386.10px;font-size:8.6px;line-height:8.6px;color:#1f1f1f;font-weight:normal;white-space:pre;">EnableC7</div><div style="position:absolute;left:839.30px;top:316.45px;font-size:8.5px;line-height:8.5px;color:#1f1f1f;font-weight:normal;white-space:pre;">Generate Options</div><div style="position:absolute;left:831.25px;top:326.00px;width:106.25px;height:66.25px;background:#cbcbcb;border-radius:4px;box-shadow:inset 0 0 0 0.5px rgba(0,0,0,0.05);"></div><div style="position:absolute;left:835.00px;top:329.30px;width:7.60px;height:7.60px;background:#ffffff;border-radius:1.5px;box-shadow:0 0 0 0.5px #c2c2c2, 0 0.5px 0.5px rgba(0,0,0,0.12);"></div><div style="position:absolute;left:847.50px;top:328.95px;font-size:8.5px;line-height:8.5px;color:#1f1f1f;font-weight:normal;white-space:pre;">Generate PStates</div><div style="position:absolute;left:835.00px;top:341.95px;width:7.60px;height:7.60px;background:#ffffff;border-radius:1.5px;box-shadow:0 0 0 0.5px #c2c2c2, 0 0.5px 0.5px rgba(0,0,0,0.12);"></div><div style="position:absolute;left:847.50px;top:341.60px;font-size:8.5px;line-height:8.5px;color:#1f1f1f;font-weight:normal;white-space:pre;">Generate CStates</div><div style="position:absolute;left:835.00px;top:354.60px;width:7.60px;height:7.60px;background:#ffffff;border-radius:1.5px;box-shadow:0 0 0 0.5px #c2c2c2, 0 0.5px 0.5px rgba(0,0,0,0.12);"></div><div style="position:absolute;left:847.50px;top:354.25px;font-size:8.5px;line-height:8.5px;color:#1f1f1f;font-weight:normal;white-space:pre;">APSN</div><div style="position:absolute;left:835.00px;top:367.25px;width:7.60px;height:7.60px;background:#ffffff;border-radius:1.5px;box-shadow:0 0 0 0.5px #c2c2c2, 0 0.5px 0.5px rgba(0,0,0,0.12);"></div><div style="position:absolute;left:847.50px;top:366.90px;font-size:8.5px;line-height:8.5px;color:#1f1f1f;font-weight:normal;white-space:pre;">APLF</div><div style="position:absolute;left:835.00px;top:379.90px;width:7.60px;height:7.60px;background:#ffffff;border-radius:1.5px;box-shadow:0 0 0 0.5px #c2c2c2, 0 0.5px 0.5px rgba(0,0,0,0.12);"></div><svg style="position:absolute;left:835.00px;top:379.90px;overflow:visible" width="7.6" height="7.6" viewBox="0 0 7.6 7.6"><path d="M1.52 3.95L3.19 5.78L6.08 1.52" fill="none" stroke="#3a3a3a" stroke-width="0.85"/></svg><div style="position:absolute;left:847.50px;top:379.55px;font-size:8.5px;line-height:8.5px;color:#1f1f1f;font-weight:normal;white-space:pre;">PluginType</div><div style="position:absolute;left:230.00px;top:407.00px;width:274.50px;height:62.00px;background:#d2d2d2;border-radius:4px;box-shadow:inset 0 0 0 0.5px rgba(0,0,0,0.05);"></div><div style="position:absolute;left:234.30px;top:412.50px;width:7.60px;height:7.60px;background:#ffffff;border-radius:1.5px;box-shadow:0 0 0 0.5px #c2c2c2, 0 0.5px 0.5px rgba(0,0,0,0.12);"></div><div style="position:absolute;left:246.30px;top:412.17px;font-size:8.45px;line-height:8.45px;color:#1f1f1f;font-weight:normal;white-space:pre;">Patch APIC</div><div style="position:absolute;left:296.80px;top:412.50px;width:7.60px;height:7.60px;background:#ffffff;border-radius:1.5px;box-shadow:0 0 0 0.5px #c2c2c2, 0 0.5px 0.5px rgba(0,0,0,0.12);"></div><div style="position:absolute;left:308.50px;top:412.17px;font-size:8.45px;line-height:8.45px;color:#1f1f1f;font-weight:normal;white-space:pre;">Smart UPS</div><div style="position:absolute;left:357.50px;top:412.50px;width:7.60px;height:7.60px;background:#ffffff;border-radius:1.5px;box-shadow:0 0 0 0.5px #c2c2c2, 0 0.5px 0.5px rgba(0,0,0,0.12);"></div><div style="position:absolute;left:369.50px;top:412.17px;font-size:8.45px;line-height:8.45px;color:#1f1f1f;font-weight:normal;white-space:pre;">Halt Enabler</div><div style="position:absolute;left:234.30px;top:428.00px;width:7.60px;height:7.60px;background:#ffffff;border-radius:1.5px;box-shadow:0 0 0 0.5px #c2c2c2, 0 0.5px 0.5px rgba(0,0,0,0.12);"></div><div style="position:absolute;left:246.30px;top:427.67px;font-size:8.45px;line-height:8.45px;color:#1f1f1f;font-weight:normal;white-space:pre;">AutoMerge</div><div style="position:absolute;left:295.80px;top:428.00px;width:7.60px;height:7.60px;background:#ffffff;border-radius:1.5px;box-shadow:0 0 0 0.5px #c2c2c2, 0 0.5px 0.5px rgba(0,0,0,0.12);"></div><svg style="position:absolute;left:295.80px;top:428.00px;overflow:visible" width="7.6" height="7.6" viewBox="0 0 7.6 7.6"><path d="M1.52 3.95L3.19 5.78L6.08 1.52" fill="none" stroke="#3a3a3a" stroke-width="0.85"/></svg><div style="position:absolute;left:307.50px;top:427.67px;font-size:8.45px;line-height:8.45px;color:#1f1f1f;font-weight:normal;white-space:pre;">FixHeaders</div><div style="position:absolute;left:358.30px;top:428.00px;width:7.60px;height:7.60px;background:#ffffff;border-radius:1.5px;box-shadow:0 0 0 0.5px #c2c2c2, 0 0.5px 0.5px rgba(0,0,0,0.12);"></div><div style="position:absolute;left:370.00px;top:427.67px;font-size:8.45px;line-height:8.45px;color:#1f1f1f;font-weight:normal;white-space:pre;">FixMCFG</div><div style="position:absolute;left:412.50px;top:428.00px;width:7.60px;height:7.60px;background:#ffffff;border-radius:1.5px;box-shadow:0 0 0 0.5px #c2c2c2, 0 0.5px 0.5px rgba(0,0,0,0.12);"></div><div style="position:absolute;left:424.50px;top:427.67px;font-size:8.45px;line-height:8.45px;color:#1f1f1f;font-weight:normal;white-space:pre;">DisableASPM</div><div style="position:absolute;left:233.75px;top:439.50px;width:115.50px;height:15.00px;background:#fff;box-shadow:0 0 0 0.5px #c8c8c8;"></div><div style="position:absolute;left:355.75px;top:439.50px;width:144.75px;height:15.00px;background:#fff;box-shadow:0 0 0 0.5px #c8c8c8;"></div><div style="position:absolute;left:-8.70px;width:600px;text-align:center;top:442.92px;font-size:10px;line-height:10px;color:#c4c4c4;font-weight:normal;white-space:pre;">0x64</div><div style="position:absolute;left:128.00px;width:600px;text-align:center;top:442.92px;font-size:10px;line-height:10px;color:#c4c4c4;font-weight:normal;white-space:pre;">0xFE</div><div style="position:absolute;left:-8.70px;width:600px;text-align:center;top:456.00px;font-size:8.6px;line-height:8.6px;color:#262626;font-weight:normal;white-space:pre;">Reset Address</div><div style="position:absolute;left:128.00px;width:600px;text-align:center;top:456.00px;font-size:8.6px;line-height:8.6px;color:#262626;font-weight:normal;white-space:pre;">Reset Value</div><div style="position:absolute;left:518.80px;top:403.90px;font-size:8.6px;line-height:8.6px;color:#1f1f1f;font-weight:normal;white-space:pre;">DisabledAML</div><div style="position:absolute;left:742.00px;top:403.90px;font-size:8.6px;line-height:8.6px;color:#1f1f1f;font-weight:normal;white-space:pre;">SortedOrder</div><div style="position:absolute;left:511.25px;top:413.50px;width:208.75px;height:55.50px;background:#d2d2d2;border-radius:4px;box-shadow:inset 0 0 0 0.5px rgba(0,0,0,0.05);"></div><div style="position:absolute;left:515.00px;top:416.50px;width:190.75px;height:12.40px;background:#ffffff;"></div><div style="position:absolute;left:515.00px;top:428.90px;width:190.75px;height:12.40px;background:#f3f4f4;"></div><div style="position:absolute;left:515.00px;top:441.30px;width:190.75px;height:12.40px;background:#ffffff;"></div><div style="position:absolute;left:515.00px;top:453.70px;width:190.75px;height:12.30px;background:#f3f4f4;"></div><div style="position:absolute;left:707.95px;top:448.90px;width:8.50px;height:1.00px;background:#8c8c8c;"></div><div style="position:absolute;left:707.95px;top:459.90px;width:8.50px;height:1.00px;background:#858585;"></div><div style="position:absolute;left:711.70px;top:456.40px;width:1.00px;height:8.30px;background:#858585;"></div><div style="position:absolute;left:734.25px;top:413.50px;width:208.75px;height:55.50px;background:#d2d2d2;border-radius:4px;box-shadow:inset 0 0 0 0.5px rgba(0,0,0,0.05);"></div><div style="position:absolute;left:738.00px;top:416.50px;width:190.75px;height:12.40px;background:#ffffff;"></div><div style="position:absolute;left:738.00px;top:428.90px;width:190.75px;height:12.40px;background:#f3f4f4;"></div><div style="position:absolute;left:738.00px;top:441.30px;width:190.75px;height:12.40px;background:#ffffff;"></div><div style="position:absolute;left:738.00px;top:453.70px;width:190.75px;height:12.30px;background:#f3f4f4;"></div><div style="position:absolute;left:930.95px;top:448.90px;width:8.50px;height:1.00px;background:#8c8c8c;"></div><div style="position:absolute;left:930.95px;top:459.90px;width:8.50px;height:1.00px;background:#858585;"></div><div style="position:absolute;left:934.70px;top:456.40px;width:1.00px;height:8.30px;background:#858585;"></div><div style="position:absolute;left:216.00px;top:483.50px;width:741.00px;height:26.00px;background:linear-gradient(90deg,#d5d5d5,#dedede 40%,#e0e0e0);border-top:1px solid #d0d0d0;box-shadow:inset 0 1px 0 #ececec;border-radius:0 0 4px 0;box-sizing:border-box;"></div><svg style="position:absolute;left:228.70px;top:492.60px;overflow:visible" width="10" height="10" viewBox="0 0 10 10"><path d="M5 0.6L9.6 4.6" stroke="#a77a4f" stroke-width="1.1" fill="none"/><path d="M5 0.6L0.4 4.6" stroke="#a77a4f" stroke-width="1.1" fill="none"/><path d="M1.6 4.4L5 1.5L8.4 4.4V9.5H1.6Z" fill="#f6f6f6" stroke="#c9c9c9" stroke-width="0.4"/><rect x="4.1" y="6.2" width="1.8" height="3.3" fill="#f08a12"/></svg><div style="position:absolute;left:242.70px;top:492.54px;font-size:9.95px;line-height:9.95px;color:#6f6f6f;font-weight:normal;white-space:pre;transform:scaleX(1.0125);transform-origin:0 0;">gandalf</div><svg style="position:absolute;left:280.20px;top:494.90px;overflow:visible" width="4" height="5" viewBox="0 0 4 5"><path d="M0.8 0.6L3 2.5L0.8 4.4" fill="none" stroke="#666" stroke-width="0.9"/></svg><svg style="position:absolute;left:288.20px;top:492.80px;overflow:visible" width="12" height="10" viewBox="0 0 12 10"><path d="M0.5 1.2Q0.5 0.5 1.2 0.5H4.2L5.2 1.6H10.6Q11.3 1.6 11.3 2.3V8.6Q11.3 9.3 10.6 9.3H1.2Q0.5 9.3 0.5 8.6Z" fill="#6fcbfa"/><path d="M0.5 2.6H11.3" stroke="#8ad6fb" stroke-width="0.6"/><circle cx="5.9" cy="5.6" r="2.3" fill="none" stroke="#3b9fe0" stroke-width="0.9"/><path d="M5.9 4.2V6.6M4.9 5.7L5.9 6.7L6.9 5.7" fill="none" stroke="#3b9fe0" stroke-width="0.7"/></svg><div style="position:absolute;left:302.80px;top:492.54px;font-size:9.95px;line-height:9.95px;color:#6f6f6f;font-weight:normal;white-space:pre;transform:scaleX(0.9995);transform-origin:0 0;">Downloads</div><svg style="position:absolute;left:356.60px;top:494.90px;overflow:visible" width="4" height="5" viewBox="0 0 4 5"><path d="M0.8 0.6L3 2.5L0.8 4.4" fill="none" stroke="#666" stroke-width="0.9"/></svg><svg style="position:absolute;left:363.80px;top:492.80px;overflow:visible" width="12" height="10" viewBox="0 0 12 10"><path d="M0.5 1.2Q0.5 0.5 1.2 0.5H4.2L5.2 1.6H10.6Q11.3 1.6 11.3 2.3V8.6Q11.3 9.3 10.6 9.3H1.2Q0.5 9.3 0.5 8.6Z" fill="#6fcbfa"/><path d="M0.5 2.6H11.3" stroke="#8ad6fb" stroke-width="0.6"/></svg><div style="position:absolute;left:378.90px;top:492.54px;font-size:9.95px;line-height:9.95px;color:#6f6f6f;font-weight:normal;white-space:pre;transform:scaleX(0.9532);transform-origin:0 0;">EFI von Kazuya91</div><svg style="position:absolute;left:461.00px;top:494.90px;overflow:visible" width="4" height="5" viewBox="0 0 4 5"><path d="M0.8 0.6L3 2.5L0.8 4.4" fill="none" stroke="#666" stroke-width="0.9"/></svg><svg style="position:absolute;left:468.60px;top:492.80px;overflow:visible" width="12" height="10" viewBox="0 0 12 10"><path d="M0.5 1.2Q0.5 0.5 1.2 0.5H4.2L5.2 1.6H10.6Q11.3 1.6 11.3 2.3V8.6Q11.3 9.3 10.6 9.3H1.2Q0.5 9.3 0.5 8.6Z" fill="#6fcbfa"/><path d="M0.5 2.6H11.3" stroke="#8ad6fb" stroke-width="0.6"/></svg><div style="position:absolute;left:483.90px;top:492.54px;font-size:9.95px;line-height:9.95px;color:#6f6f6f;font-weight:normal;white-space:pre;transform:scaleX(0.8076);transform-origin:0 0;">EFI</div><svg style="position:absolute;left:501.00px;top:494.90px;overflow:visible" width="4" height="5" viewBox="0 0 4 5"><path d="M0.8 0.6L3 2.5L0.8 4.4" fill="none" stroke="#666" stroke-width="0.9"/></svg><svg style="position:absolute;left:508.40px;top:492.80px;overflow:visible" width="12" height="10" viewBox="0 0 12 10"><path d="M0.5 1.2Q0.5 0.5 1.2 0.5H4.2L5.2 1.6H10.6Q11.3 1.6 11.3 2.3V8.6Q11.3 9.3 10.6 9.3H1.2Q0.5 9.3 0.5 8.6Z" fill="#6fcbfa"/><path d="M0.5 2.6H11.3" stroke="#8ad6fb" stroke-width="0.6"/></svg><div style="position:absolute;left:523.80px;top:492.54px;font-size:9.95px;line-height:9.95px;color:#6f6f6f;font-weight:normal;white-space:pre;transform:scaleX(0.8957);transform-origin:0 0;">CLOVER</div><svg style="position:absolute;left:565.00px;top:494.90px;overflow:visible" width="4" height="5" viewBox="0 0 4 5"><path d="M0.8 0.6L3 2.5L0.8 4.4" fill="none" stroke="#666" stroke-width="0.9"/></svg><svg style="position:absolute;left:574.60px;top:492.20px;overflow:visible" width="8" height="10.6" viewBox="0 0 8 10.6"><path d="M0.5 0.5H5.3L7.5 2.7V10.1H0.5Z" fill="#fafafa" stroke="#d0d0d0" stroke-width="0.5"/><path d="M2 5h4M2 6.5h4M2 8h4" stroke="#e2e2e2" stroke-width="0.6"/></svg><div style="position:absolute;left:587.50px;top:492.54px;font-size:9.95px;line-height:9.95px;color:#6f6f6f;font-weight:normal;white-space:pre;transform:scaleX(1.0530);transform-origin:0 0;">config.plist</div><div style="position:absolute;left:934.30px;top:493.00px;width:10.70px;height:1.00px;background:#8a8a8a;"></div><div style="position:absolute;left:934.30px;top:495.10px;width:10.70px;height:1.00px;background:#b0b0b0;"></div><div style="position:absolute;left:934.30px;top:497.20px;width:10.70px;height:1.00px;background:#8a8a8a;"></div><div style="position:absolute;left:934.30px;top:499.40px;width:10.70px;height:1.00px;background:#8a8a8a;"></div><div style="position:absolute;left:6.00px;top:6.00px;width:951.00px;height:503.50px;box-shadow:inset 1px 0 0 rgba(210,210,210,0.28), inset -1px 0 0 rgba(210,210,210,0.28), inset 0 -1px 0 rgba(210,210,210,0.3);border-radius:5px 5px 4px 4px;"></div></div>
<div class="w"><div style="position:absolute;left:963.00px;top:5.15px;width:951.00px;height:503.26px;background:#dadada;border-radius:5px 5px 4px 4px;"></div><div style="position:absolute;left:963.00px;top:5.15px;width:951.00px;height:17.12px;background:#858585;border-radius:5px 5px 0 0;box-shadow:inset 0 1px 0 rgba(255,255,255,0.22);"></div><div style="position:absolute;left:1173.00px;top:18.37px;width:741.00px;height:17.92px;background:linear-gradient(#e3e3e3,#dadada);"></div><div style="position:absolute;left:968.54px;top:7.05px;width:9.20px;height:9.21px;background:#f9564e;border-radius:50%;"></div><div style="position:absolute;left:983.54px;top:7.05px;width:9.20px;height:9.21px;background:#e8bf27;border-radius:50%;"></div><div style="position:absolute;left:998.54px;top:7.05px;width:9.20px;height:9.21px;background:#a4a4a4;border-radius:50%;"></div><div style="position:absolute;left:1140.30px;width:600px;text-align:center;top:7.48px;font-size:10.4px;line-height:10.4px;color:#f4f4f4;font-weight:normal;white-space:pre;transform:scaleX(1.0115);transform-origin:50% 0;">config.plist</div><div style="position:absolute;left:963.00px;top:18.17px;width:211.00px;height:490.25px;background:linear-gradient(#535353 0px,#484848 9px,#424242 17px);border-radius:3px 0 0 4px;"></div><div style="position:absolute;left:767.30px;width:600px;text-align:center;top:23.17px;font-size:8.4px;line-height:8.4px;color:#bdbdbd;font-weight:bold;white-space:pre;transform:scaleX(0.9090);transform-origin:50% 0;letter-spacing:0.3px;">SEKTIONEN</div><div style="position:absolute;left:963.00px;top:34.19px;width:211.30px;height:17.82px;background:#0a5fce;"></div><svg style="position:absolute;left:979.00px;top:37.94px;overflow:visible" width="13" height="9" viewBox="0 0 13 9"><rect x="0.6" y="0.70" width="2" height="1.6" fill="#e6ecf7"/><rect x="5.2" y="0.70" width="6.9" height="1.6" fill="#e6ecf7"/><rect x="0.6" y="4.20" width="2" height="1.6" fill="#e6ecf7"/><rect x="5.2" y="4.20" width="6.9" height="1.6" fill="#e6ecf7"/><rect x="0.6" y="7.70" width="2" height="1.6" fill="#e6ecf7"/><rect x="5.2" y="7.70" width="6.9" height="1.6" fill="#e6ecf7"/></svg><div style="position:absolute;left:996.70px;top:39.17px;font-size:10px;line-height:10px;color:#ffffff;font-weight:normal;white-space:pre;-webkit-text-stroke:0.2px #ffffff;">Acpi</div><svg style="position:absolute;left:979.00px;top:55.82px;overflow:visible" width="13" height="9" viewBox="0 0 13 9"><rect x="0.6" y="0.70" width="2" height="1.6" fill="#b6b6b6"/><rect x="5.2" y="0.70" width="6.9" height="1.6" fill="#b6b6b6"/><rect x="0.6" y="4.20" width="2" height="1.6" fill="#b6b6b6"/><rect x="5.2" y="4.20" width="6.9" height="1.6" fill="#b6b6b6"/><rect x="0.6" y="7.70" width="2" height="1.6" fill="#b6b6b6"/><rect x="5.2" y="7.70" width="6.9" height="1.6" fill="#b6b6b6"/></svg><div style="position:absolute;left:996.70px;top:57.04px;font-size:10px;line-height:10px;color:#f2f2f2;font-weight:normal;white-space:pre;-webkit-text-stroke:0.2px #f2f2f2;">Boot</div><svg style="position:absolute;left:979.00px;top:73.69px;overflow:visible" width="13" height="9" viewBox="0 0 13 9"><rect x="0.6" y="0.70" width="2" height="1.6" fill="#b6b6b6"/><rect x="5.2" y="0.70" width="6.9" height="1.6" fill="#b6b6b6"/><rect x="0.6" y="4.20" width="2" height="1.6" fill="#b6b6b6"/><rect x="5.2" y="4.20" width="6.9" height="1.6" fill="#b6b6b6"/><rect x="0.6" y="7.70" width="2" height="1.6" fill="#b6b6b6"/><rect x="5.2" y="7.70" width="6.9" height="1.6" fill="#b6b6b6"/></svg><div style="position:absolute;left:996.70px;top:74.91px;font-size:10px;line-height:10px;color:#f2f2f2;font-weight:normal;white-space:pre;-webkit-text-stroke:0.2px #f2f2f2;">Boot Graphics</div><svg style="position:absolute;left:979.00px;top:91.56px;overflow:visible" width="13" height="9" viewBox="0 0 13 9"><rect x="0.6" y="0.70" width="2" height="1.6" fill="#b6b6b6"/><rect x="5.2" y="0.70" width="6.9" height="1.6" fill="#b6b6b6"/><rect x="0.6" y="4.20" width="2" height="1.6" fill="#b6b6b6"/><rect x="5.2" y="4.20" width="6.9" height="1.6" fill="#b6b6b6"/><rect x="0.6" y="7.70" width="2" height="1.6" fill="#b6b6b6"/><rect x="5.2" y="7.70" width="6.9" height="1.6" fill="#b6b6b6"/></svg><div style="position:absolute;left:996.70px;top:92.79px;font-size:10px;line-height:10px;color:#f2f2f2;font-weight:normal;white-space:pre;-webkit-text-stroke:0.2px #f2f2f2;">Cpu</div><svg style="position:absolute;left:979.00px;top:109.44px;overflow:visible" width="13" height="9" viewBox="0 0 13 9"><rect x="0.6" y="0.70" width="2" height="1.6" fill="#b6b6b6"/><rect x="5.2" y="0.70" width="6.9" height="1.6" fill="#b6b6b6"/><rect x="0.6" y="4.20" width="2" height="1.6" fill="#b6b6b6"/><rect x="5.2" y="4.20" width="6.9" height="1.6" fill="#b6b6b6"/><rect x="0.6" y="7.70" width="2" height="1.6" fill="#b6b6b6"/><rect x="5.2" y="7.70" width="6.9" height="1.6" fill="#b6b6b6"/></svg><div style="position:absolute;left:996.70px;top:110.66px;font-size:10px;line-height:10px;color:#f2f2f2;font-weight:normal;white-space:pre;-webkit-text-stroke:0.2px #f2f2f2;">Devices</div><svg style="position:absolute;left:979.00px;top:127.31px;overflow:visible" width="13" height="9" viewBox="0 0 13 9"><rect x="0.6" y="0.70" width="2" height="1.6" fill="#b6b6b6"/><rect x="5.2" y="0.70" width="6.9" height="1.6" fill="#b6b6b6"/><rect x="0.6" y="4.20" width="2" height="1.6" fill="#b6b6b6"/><rect x="5.2" y="4.20" width="6.9" height="1.6" fill="#b6b6b6"/><rect x="0.6" y="7.70" width="2" height="1.6" fill="#b6b6b6"/><rect x="5.2" y="7.70" width="6.9" height="1.6" fill="#b6b6b6"/></svg><div style="position:absolute;left:996.70px;top:128.53px;font-size:10px;line-height:10px;color:#f2f2f2;font-weight:normal;white-space:pre;-webkit-text-stroke:0.2px #f2f2f2;">Disable Drivers</div><svg style="position:absolute;left:979.00px;top:145.18px;overflow:visible" width="13" height="9" viewBox="0 0 13 9"><rect x="0.6" y="0.70" width="2" height="1.6" fill="#b6b6b6"/><rect x="5.2" y="0.70" width="6.9" height="1.6" fill="#b6b6b6"/><rect x="0.6" y="4.20" width="2" height="1.6" fill="#b6b6b6"/><rect x="5.2" y="4.20" width="6.9" height="1.6" fill="#b6b6b6"/><rect x="0.6" y="7.70" width="2" height="1.6" fill="#b6b6b6"/><rect x="5.2" y="7.70" width="6.9" height="1.6" fill="#b6b6b6"/></svg><div style="position:absolute;left:996.70px;top:146.41px;font-size:10px;line-height:10px;color:#f2f2f2;font-weight:normal;white-space:pre;-webkit-text-stroke:0.2px #f2f2f2;">Gui</div><svg style="position:absolute;left:979.00px;top:163.06px;overflow:visible" width="13" height="9" viewBox="0 0 13 9"><rect x="0.6" y="0.70" width="2" height="1.6" fill="#b6b6b6"/><rect x="5.2" y="0.70" width="6.9" height="1.6" fill="#b6b6b6"/><rect x="0.6" y="4.20" width="2" height="1.6" fill="#b6b6b6"/><rect x="5.2" y="4.20" width="6.9" height="1.6" fill="#b6b6b6"/><rect x="0.6" y="7.70" width="2" height="1.6" fill="#b6b6b6"/><rect x="5.2" y="7.70" width="6.9" height="1.6" fill="#b6b6b6"/></svg><div style="position:absolute;left:996.70px;top:164.28px;font-size:10px;line-height:10px;color:#f2f2f2;font-weight:normal;white-space:pre;-webkit-text-stroke:0.2px #f2f2f2;">Graphics</div><svg style="position:absolute;left:979.00px;top:180.93px;overflow:visible" width="13" height="9" viewBox="0 0 13 9"><rect x="0.6" y="0.70" width="2" height="1.6" fill="#b6b6b6"/><rect x="5.2" y="0.70" width="6.9" height="1.6" fill="#b6b6b6"/><rect x="0.6" y="4.20" width="2" height="1.6" fill="#b6b6b6"/><rect x="5.2" y="4.20" width="6.9" height="1.6" fill="#b6b6b6"/><rect x="0.6" y="7.70" width="2" height="1.6" fill="#b6b6b6"/><rect x="5.2" y="7.70" width="6.9" height="1.6" fill="#b6b6b6"/></svg><div style="position:absolute;left:996.70px;top:182.15px;font-size:10px;line-height:10px;color:#f2f2f2;font-weight:normal;white-space:pre;-webkit-text-stroke:0.2px #f2f2f2;">Kernel and Kext Patches</div><svg style="position:absolute;left:979.00px;top:198.80px;overflow:visible" width="13" height="9" viewBox="0 0 13 9"><rect x="0.6" y="0.70" width="2" height="1.6" fill="#b6b6b6"/><rect x="5.2" y="0.70" width="6.9" height="1.6" fill="#b6b6b6"/><rect x="0.6" y="4.20" width="2" height="1.6" fill="#b6b6b6"/><rect x="5.2" y="4.20" width="6.9" height="1.6" fill="#b6b6b6"/><rect x="0.6" y="7.70" width="2" height="1.6" fill="#b6b6b6"/><rect x="5.2" y="7.70" width="6.9" height="1.6" fill="#b6b6b6"/></svg><div style="position:absolute;left:996.70px;top:200.03px;font-size:10px;line-height:10px;color:#f2f2f2;font-weight:normal;white-space:pre;-webkit-text-stroke:0.2px #f2f2f2;">Rt Variables</div><svg style="position:absolute;left:979.00px;top:216.68px;overflow:visible" width="13" height="9" viewBox="0 0 13 9"><rect x="0.6" y="0.70" width="2" height="1.6" fill="#b6b6b6"/><rect x="5.2" y="0.70" width="6.9" height="1.6" fill="#b6b6b6"/><rect x="0.6" y="4.20" width="2" height="1.6" fill="#b6b6b6"/><rect x="5.2" y="4.20" width="6.9" height="1.6" fill="#b6b6b6"/><rect x="0.6" y="7.70" width="2" height="1.6" fill="#b6b6b6"/><rect x="5.2" y="7.70" width="6.9" height="1.6" fill="#b6b6b6"/></svg><div style="position:absolute;left:996.70px;top:217.90px;font-size:10px;line-height:10px;color:#f2f2f2;font-weight:normal;white-space:pre;-webkit-text-stroke:0.2px #f2f2f2;">SMBIOS</div><svg style="position:absolute;left:979.00px;top:234.55px;overflow:visible" width="13" height="9" viewBox="0 0 13 9"><rect x="0.6" y="0.70" width="2" height="1.6" fill="#b6b6b6"/><rect x="5.2" y="0.70" width="6.9" height="1.6" fill="#b6b6b6"/><rect x="0.6" y="4.20" width="2" height="1.6" fill="#b6b6b6"/><rect x="5.2" y="4.20" width="6.9" height="1.6" fill="#b6b6b6"/><rect x="0.6" y="7.70" width="2" height="1.6" fill="#b6b6b6"/><rect x="5.2" y="7.70" width="6.9" height="1.6" fill="#b6b6b6"/></svg><div style="position:absolute;left:996.70px;top:235.77px;font-size:10px;line-height:10px;color:#f2f2f2;font-weight:normal;white-space:pre;-webkit-text-stroke:0.2px #f2f2f2;">System Parameters</div><div style="position:absolute;left:767.30px;width:600px;text-align:center;top:256.68px;font-size:8.4px;line-height:8.4px;color:#b0b0b0;font-weight:bold;white-space:pre;transform:scaleX(0.9031);transform-origin:50% 0;letter-spacing:0.3px;">WERKZEUGE</div><svg style="position:absolute;left:979.00px;top:271.10px;overflow:visible" width="12" height="12" viewBox="0 0 12 12"><rect x="1.9" y="0" width="9.1" height="11.9" rx="1.4" fill="#c2c2c2"/><circle cx="6.2" cy="4.6" r="2.5" fill="#4a4a4a"/><circle cx="6.2" cy="4.6" r="0.8" fill="#c2c2c2"/><path d="M6.6 6L8.8 9" stroke="#4a4a4a" stroke-width="1.2"/><rect x="2.9" y="9.7" width="1" height="1" fill="#4a4a4a"/></svg><div style="position:absolute;left:996.70px;top:272.97px;font-size:10px;line-height:10px;color:#f2f2f2;font-weight:normal;white-space:pre;-webkit-text-stroke:0.2px #f2f2f2;">Mounte EFI</div><svg style="position:absolute;left:979.00px;top:288.95px;overflow:visible" width="12" height="12" viewBox="0 0 12 12"><path d="M0.6 1h1.4M0.6 3.3h1.4M0.6 5.6h1.4M0.6 7.9h1.4M0.6 10.2h1.4" stroke="#c2c2c2" stroke-width="1.3"/><path d="M3.4 0.9h7.6M3.4 3h7.6" stroke="#c2c2c2" stroke-width="1.1"/><path d="M3.5 5.6h1M3.5 7.9h1M3.5 10.2h1" stroke="#c2c2c2" stroke-width="1.2"/><circle cx="8" cy="7.3" r="2.2" fill="none" stroke="#c2c2c2" stroke-width="1.2"/><path d="M9.6 8.9L11.6 11" stroke="#c2c2c2" stroke-width="1.3"/></svg><div style="position:absolute;left:996.70px;top:290.82px;font-size:10px;line-height:10px;color:#f2f2f2;font-weight:normal;white-space:pre;-webkit-text-stroke:0.2px #f2f2f2;">Boot.log</div><svg style="position:absolute;left:979.00px;top:306.80px;overflow:visible" width="12" height="12" viewBox="0 0 12 12"><circle cx="4.2" cy="4.5" r="2.7" fill="none" stroke="#c2c2c2" stroke-width="1.5"/><circle cx="4.2" cy="4.5" r="3.7" fill="none" stroke="#c2c2c2" stroke-width="1.1" stroke-dasharray="1.2 1.3"/><circle cx="9.3" cy="10" r="1.8" fill="none" stroke="#c2c2c2" stroke-width="1.3"/><circle cx="9.3" cy="10" r="2.6" fill="none" stroke="#c2c2c2" stroke-width="0.9" stroke-dasharray="1.1 1.1"/></svg><div style="position:absolute;left:996.70px;top:308.67px;font-size:10px;line-height:10px;color:#f2f2f2;font-weight:normal;white-space:pre;-webkit-text-stroke:0.2px #f2f2f2;">Generiere Config</div><svg style="position:absolute;left:979.00px;top:324.65px;overflow:visible" width="12" height="12" viewBox="0 0 12 12"><path d="M6.5 0.8C3 0.8 0.2 3.2 0.2 6.4C0.2 8.6 1.2 9.2 2.2 8.6C3.2 8 3.3 8.6 3.4 9.6C3.6 11 4.8 11.6 6.3 11.5C9.6 11.3 12 9.1 12 6C12 3 9.6 0.8 6.5 0.8Z" fill="#c2c2c2"/><circle cx="4" cy="3.6" r="0.9" fill="#4a4a4a"/><circle cx="7" cy="2.8" r="0.8" fill="#5a5a5a"/><circle cx="9.5" cy="4.2" r="0.8" fill="#5a5a5a"/><circle cx="6.8" cy="8.6" r="1.1" fill="#4a4a4a"/></svg><div style="position:absolute;left:996.70px;top:326.52px;font-size:10px;line-height:10px;color:#f2f2f2;font-weight:normal;white-space:pre;-webkit-text-stroke:0.2px #f2f2f2;">Themes Editor</div><svg style="position:absolute;left:979.00px;top:342.49px;overflow:visible" width="12" height="12" viewBox="0 0 12 12"><path d="M4.9 0h2.2v4.3h2.7L6 8.4L2.2 4.3h2.7Z" fill="#c2c2c2"/><path d="M0.7 7.6v3.5h10.6v-3.5" fill="none" stroke="#c2c2c2" stroke-width="1.3"/></svg><div style="position:absolute;left:996.70px;top:344.37px;font-size:10px;line-height:10px;color:#f2f2f2;font-weight:normal;white-space:pre;-webkit-text-stroke:0.2px #f2f2f2;">Installiere/Aktualisiere Clover</div><svg style="position:absolute;left:979.00px;top:360.34px;overflow:visible" width="12" height="12" viewBox="0 0 12 12"><path d="M1 1L4.6 4.6" stroke="#c2c2c2" stroke-width="1.1"/><path d="M4.3 4.3L10.8 10.8" stroke="#c2c2c2" stroke-width="1.9"/><path d="M1.2 10.8L8 4" stroke="#c2c2c2" stroke-width="1.8"/><path d="M7.2 2.4A2.6 2.6 0 1 0 11.1 5.6L9.6 5L8.6 3.6Z" fill="#c2c2c2"/></svg><div style="position:absolute;left:996.70px;top:362.22px;font-size:10px;line-height:10px;color:#f2f2f2;font-weight:normal;white-space:pre;-webkit-text-stroke:0.2px #f2f2f2;">Installiere Treiber</div><svg style="position:absolute;left:979.00px;top:378.19px;overflow:visible" width="12" height="12" viewBox="0 0 12 12"><rect x="3.3" y="1.9" width="6.4" height="8.6" fill="none" stroke="#c2c2c2" stroke-width="2"/><path d="M0.5 2.8h2M0.5 4.6h2M0.5 6.4h2M0.5 8.2h2M0.5 10h2M10.5 2.8h2M10.5 4.6h2M10.5 6.4h2M10.5 8.2h2M10.5 10h2M4.5 0v1M6.5 0v1M8.5 0v1M4.5 11.4v1M6.5 11.4v1M8.5 11.4v1" stroke="#c2c2c2" stroke-width="0.7"/></svg><div style="position:absolute;left:996.70px;top:380.06px;font-size:10px;line-height:10px;color:#f2f2f2;font-weight:normal;white-space:pre;-webkit-text-stroke:0.2px #f2f2f2;">NVRAM</div><svg style="position:absolute;left:979.00px;top:396.04px;overflow:visible" width="12" height="12" viewBox="0 0 12 12"><path d="M10.4 5.5A4.4 4.4 0 0 0 3 2.6M1.6 6.6A4.4 4.4 0 0 0 9.2 9.6" fill="none" stroke="#c2c2c2" stroke-width="1.3"/><path d="M0.2 6.6h3.3L1.8 4.4Z M12 5.6h-3.3L10.4 7.8Z" fill="#c2c2c2"/></svg><div style="position:absolute;left:996.70px;top:397.91px;font-size:10px;line-height:10px;color:#f2f2f2;font-weight:normal;white-space:pre;-webkit-text-stroke:0.2px #f2f2f2;">HEX Konverter</div><svg style="position:absolute;left:979.00px;top:413.89px;overflow:visible" width="12" height="12" viewBox="0 0 12 12"><path d="M0.5 1.1h11M0.5 2.8h7.5M0.5 4.1h11M0.5 5.6h7.5M0.5 7.1h11M0.5 8.6h7.5" stroke="#c2c2c2" stroke-width="0.9"/></svg><div style="position:absolute;left:996.70px;top:415.76px;font-size:10px;line-height:10px;color:#f2f2f2;font-weight:normal;white-space:pre;-webkit-text-stroke:0.2px #f2f2f2;">Text Modus</div><svg style="position:absolute;left:979.00px;top:431.74px;overflow:visible" width="12" height="12" viewBox="0 0 12 12"><path d="M1.6 7.3C1 8.2 1.2 9.4 2 10.1C2.8 10.9 4.1 10.9 5 10.2L9.2 6.2L5.9 2.9Z" fill="#c2c2c2"/><path d="M6.8 3.8L9.1 0.9M8.6 5.6L11.5 3.3M1.8 10L0.3 11.7" stroke="#c2c2c2" stroke-width="1.2"/></svg><div style="position:absolute;left:996.70px;top:433.61px;font-size:10px;line-height:10px;color:#f2f2f2;font-weight:normal;white-space:pre;-webkit-text-stroke:0.2px #f2f2f2;">Kexts Installer</div><svg style="position:absolute;left:979.00px;top:449.58px;overflow:visible" width="12" height="12" viewBox="0 0 12 12"><rect x="0.6" y="-0.2" width="8.4" height="8.6" rx="1.3" fill="none" stroke="#c2c2c2" stroke-width="1"/><rect x="3.4" y="2.6" width="8.4" height="8.8" rx="1.3" fill="#424242" stroke="#c2c2c2" stroke-width="1.3"/></svg><div style="position:absolute;left:996.70px;top:451.46px;font-size:10px;line-height:10px;color:#f2f2f2;font-weight:normal;white-space:pre;-webkit-text-stroke:0.2px #f2f2f2;">Clover Kloner</div><div style="position:absolute;left:963.00px;top:481.48px;width:210.00px;height:1.00px;background:#393939;"></div><div style="position:absolute;left:963.00px;top:482.48px;width:210.00px;height:0.80px;background:#4a4a4a;"></div><svg style="position:absolute;left:972.50px;top:490.09px;overflow:visible" width="13" height="12.5" viewBox="0 0 13 12.5"><path d="M3.3 0H9.7L12.4 2.8V11.9H3.3Z" fill="#c9c9c9"/><path d="M3.6 2.6L7.2 6.5L3.6 10.4" stroke="#424242" stroke-width="1.2" fill="none"/><path d="M0.3 6.5H5.2" stroke="#c9c9c9" stroke-width="2"/><path d="M4.2 4.2L6.4 6.5L4.2 8.8Z" fill="#c9c9c9"/></svg><svg style="position:absolute;left:1009.00px;top:490.09px;overflow:visible" width="12" height="12.5" viewBox="0 0 12 12.5"><path d="M0 0H6L8.6 2.6V11.9H0Z" fill="#c9c9c9"/><path d="M8.9 2.4L5.3 6.5L8.9 10.6" stroke="#424242" stroke-width="1.2" fill="none"/><path d="M7.2 3.4L11.2 6.5L7.2 9.6L5.6 6.5Z" fill="#c9c9c9"/></svg><svg style="position:absolute;left:1043.30px;top:489.89px;overflow:visible" width="13" height="12.5" viewBox="0 0 13 12.5"><path d="M6.5 0L13 5.8h-2v6.7h-3v-4h-3v4h-3v-6.7h-2Z" fill="#c9c9c9"/></svg><svg style="position:absolute;left:1079.00px;top:489.89px;overflow:visible" width="12" height="12" viewBox="0 0 12 12"><circle cx="2.8" cy="6" r="2.6" fill="#c9c9c9"/><circle cx="9.8" cy="2" r="2" fill="#c9c9c9"/><circle cx="9.8" cy="10" r="2" fill="#c9c9c9"/><path d="M2.8 6L9.8 2M2.8 6L9.8 10" stroke="#c9c9c9" stroke-width="1.5"/></svg><div style="position:absolute;left:1114.00px;top:490.26px;font-size:6.2px;line-height:6.2px;color:#c4c4c4;font-weight:bold;white-space:pre;font-style:italic;">Pay</div><div style="position:absolute;left:1114.00px;top:497.17px;font-size:6.2px;line-height:6.2px;color:#c4c4c4;font-weight:bold;white-space:pre;font-style:italic;">Pal</div><div style="position:absolute;left:1128.90px;top:492.26px;font-size:9.7px;line-height:9.7px;color:#dedede;font-weight:bold;white-space:pre;">Donate</div><div style="position:absolute;left:1188.00px;top:20.87px;width:8.40px;height:8.51px;background:#2b82f6;border-radius:2px;"></div><div style="position:absolute;left:1190.10px;top:24.67px;width:4.00px;height:1.10px;background:#fff;"></div><div style="position:absolute;left:1201.00px;top:21.30px;font-size:8.75px;line-height:8.75px;color:#1f1f1f;font-weight:normal;white-space:pre;">Element ist standardmässig aktiviert</div><div style="position:absolute;left:1581.50px;top:19.97px;font-size:10.05px;line-height:10.05px;color:#1e1e1e;font-weight:normal;white-space:pre;">HEX-Code wird in Base 64 umgewandelt [Hex]</div><div style="position:absolute;left:1801.50px;top:19.89px;font-size:10.2px;line-height:10.2px;color:#1e1e1e;font-weight:normal;white-space:pre;">Erforderliches Feld (*)</div><div style="position:absolute;left:1187.00px;top:43.50px;width:712.50px;height:252.13px;background:#d2d2d2;border-radius:4px;box-shadow:inset 0 0 0 0.5px rgba(0,0,0,0.05);"></div><div style="position:absolute;left:1477.50px;top:37.09px;width:132.00px;height:14.22px;background:#fff;border-radius:3px;box-shadow:0 0 0 0.5px #bdbdbd, 0 0.5px 1px rgba(0,0,0,0.15);"></div><div style="position:absolute;left:1477.50px;top:37.09px;width:42.50px;height:14.22px;background:linear-gradient(#3d95fb,#1a78f2);border-radius:3px 0 0 3px;"></div><div style="position:absolute;left:1198.90px;width:600px;text-align:center;top:39.96px;font-size:9.3px;line-height:9.3px;color:#ffffff;font-weight:normal;white-space:pre;">DSDT</div><div style="position:absolute;left:1264.50px;width:600px;text-align:center;top:39.74px;font-size:9.75px;line-height:9.75px;color:#262626;font-weight:normal;white-space:pre;">RenameDevices</div><div style="position:absolute;left:1199.60px;top:56.12px;font-size:8.6px;line-height:8.6px;color:#1f1f1f;font-weight:normal;white-space:pre;">Patches</div><div style="position:absolute;left:1191.50px;top:65.58px;width:704.25px;height:92.37px;background:#cbcbcb;border-radius:4px;box-shadow:inset 0 0 0 0.5px rgba(0,0,0,0.05);"></div><div style="position:absolute;left:1195.25px;top:69.93px;width:697.25px;height:72.25px;background:#fff;"></div><div style="position:absolute;left:1195.25px;top:69.93px;width:697.25px;height:17.22px;background:#f4f4f4;border-bottom:1px solid #d6d6d6;box-sizing:border-box;"></div><div style="position:absolute;left:1354.70px;top:71.34px;width:1.00px;height:13.52px;background:#dedede;"></div><div style="position:absolute;left:1520.30px;top:71.34px;width:1.00px;height:13.52px;background:#dedede;"></div><div style="position:absolute;left:1686.50px;top:71.34px;width:1.00px;height:13.52px;background:#dedede;"></div><div style="position:absolute;left:1834.40px;top:71.34px;width:1.00px;height:13.52px;background:#dedede;"></div><div style="position:absolute;left:1198.50px;top:74.17px;font-size:8.55px;line-height:8.55px;color:#2a2a2a;font-weight:normal;white-space:pre;">Comment</div><div style="position:absolute;left:1358.20px;top:74.14px;font-size:8.6px;line-height:8.6px;color:#2a2a2a;font-weight:normal;white-space:pre;">Find* [HEX]</div><div style="position:absolute;left:1523.80px;top:74.19px;font-size:8.5px;line-height:8.5px;color:#2a2a2a;font-weight:normal;white-space:pre;">Replace [HEX]</div><div style="position:absolute;left:1689.90px;top:74.14px;font-size:8.6px;line-height:8.6px;color:#2a2a2a;font-weight:normal;white-space:pre;">TgtBridge [HEX]</div><div style="position:absolute;left:1563.25px;width:600px;text-align:center;top:74.12px;font-size:8.65px;line-height:8.65px;color:#2a2a2a;font-weight:normal;white-space:pre;">Disabled</div><div style="position:absolute;left:1195.25px;top:87.16px;width:697.25px;height:14.87px;background:#ffffff;"></div><div style="position:absolute;left:1195.25px;top:102.03px;width:697.25px;height:14.87px;background:#f4f5f5;"></div><div style="position:absolute;left:1195.25px;top:116.90px;width:697.25px;height:14.87px;background:#ffffff;"></div><div style="position:absolute;left:1195.25px;top:131.77px;width:697.25px;height:10.41px;background:#f4f5f5;"></div><div style="position:absolute;left:1191.50px;top:142.18px;width:704.25px;height:3.25px;background:#cbcbcb;"></div><div style="position:absolute;left:1487.80px;top:145.53px;width:111.70px;height:10.11px;background:#fff;border-radius:2.5px;box-shadow:0 0 0 0.5px #c0c0c0, 0 0.5px 0.8px rgba(0,0,0,0.18);"></div><div style="position:absolute;left:1589.50px;top:145.53px;width:10.00px;height:10.11px;background:linear-gradient(#3d95fb,#1a78f2);border-radius:0 2.5px 2.5px 0;"></div><svg style="position:absolute;left:1591.50px;top:147.24px;overflow:visible" width="6" height="7.5" viewBox="0 0 6 7.5"><path d="M1.2 2.9L3 1.1L4.8 2.9M1.2 4.6L3 6.4L4.8 4.6" fill="none" stroke="#fff" stroke-width="0.9"/></svg><div style="position:absolute;left:1240.30px;width:600px;text-align:center;top:146.42px;font-size:8.65px;line-height:8.65px;color:#222;font-weight:normal;white-space:pre;">Liste von Patches</div><div style="position:absolute;left:1870.00px;top:150.54px;width:8.00px;height:1.00px;background:#8c8c8c;"></div><div style="position:absolute;left:1884.00px;top:150.54px;width:8.00px;height:1.00px;background:#858585;"></div><div style="position:absolute;left:1887.50px;top:147.44px;width:1.00px;height:7.81px;background:#858585;"></div><div style="position:absolute;left:1199.00px;top:165.46px;font-size:8.6px;line-height:8.6px;color:#1f1f1f;font-weight:normal;white-space:pre;">Fixes</div><div style="position:absolute;left:1191.50px;top:175.47px;width:470.00px;height:49.82px;background:#cbcbcb;border-radius:4px;box-shadow:inset 0 0 0 0.5px rgba(0,0,0,0.05);"></div><div style="position:absolute;left:1197.10px;top:179.98px;width:7.60px;height:7.61px;background:#ffffff;border-radius:1.5px;box-shadow:0 0 0 0.5px #c2c2c2, 0 0.5px 0.5px rgba(0,0,0,0.12);"></div><div style="position:absolute;left:1209.50px;top:179.68px;font-size:8.4px;line-height:8.4px;color:#1f1f1f;font-weight:normal;white-space:pre;">FixDarwin7</div><div style="position:absolute;left:1197.10px;top:193.50px;width:7.60px;height:7.61px;background:#ffffff;border-radius:1.5px;box-shadow:0 0 0 0.5px #c2c2c2, 0 0.5px 0.5px rgba(0,0,0,0.12);"></div><div style="position:absolute;left:1209.50px;top:193.20px;font-size:8.4px;line-height:8.4px;color:#1f1f1f;font-weight:normal;white-space:pre;">FixADP1</div><div style="position:absolute;left:1197.10px;top:206.81px;width:7.60px;height:7.61px;background:#2b82f6;border-radius:1.8px;box-shadow:0 0 0 0.5px #1f6fe0;"></div><svg style="position:absolute;left:1197.10px;top:206.81px;overflow:visible" width="7.6" height="7.6" viewBox="0 0 7.6 7.6"><path d="M1.67 3.95L3.19 5.62L6.08 1.82" fill="none" stroke="#fff" stroke-width="1.2"/></svg><div style="position:absolute;left:1209.50px;top:206.52px;font-size:8.4px;line-height:8.4px;color:#1f1f1f;font-weight:normal;white-space:pre;">FixRegions</div><div style="position:absolute;left:1260.30px;top:179.98px;width:7.60px;height:7.61px;background:#ffffff;border-radius:1.5px;box-shadow:0 0 0 0.5px #c2c2c2, 0 0.5px 0.5px rgba(0,0,0,0.12);"></div><div style="position:absolute;left:1271.50px;top:179.68px;font-size:8.4px;line-height:8.4px;color:#1f1f1f;font-weight:normal;white-space:pre;">FixRTC</div><div style="position:absolute;left:1260.30px;top:193.50px;width:7.60px;height:7.61px;background:#2b82f6;border-radius:1.8px;box-shadow:0 0 0 0.5px #1f6fe0;"></div><svg style="position:absolute;left:1260.30px;top:193.50px;overflow:visible" width="7.6" height="7.6" viewBox="0 0 7.6 7.6"><path d="M1.67 3.95L3.19 5.62L6.08 1.82" fill="none" stroke="#fff" stroke-width="1.2"/></svg><div style="position:absolute;left:1271.50px;top:193.20px;font-size:8.4px;line-height:8.4px;color:#1f1f1f;font-weight:normal;white-space:pre;">DeleteUnused</div><div style="position:absolute;left:1260.30px;top:206.81px;width:7.60px;height:7.61px;background:#2b82f6;border-radius:1.8px;box-shadow:0 0 0 0.5px #1f6fe0;"></div><svg style="position:absolute;left:1260.30px;top:206.81px;overflow:visible" width="7.6" height="7.6" viewBox="0 0 7.6 7.6"><path d="M1.67 3.95L3.19 5.62L6.08 1.82" fill="none" stroke="#fff" stroke-width="1.2"/></svg><div style="position:absolute;left:1271.50px;top:206.52px;font-size:8.4px;line-height:8.4px;color:#1f1f1f;font-weight:normal;white-space:pre;">FixMutex</div><div style="position:absolute;left:1336.30px;top:179.98px;width:7.60px;height:7.61px;background:#ffffff;border-radius:1.5px;box-shadow:0 0 0 0.5px #c2c2c2, 0 0.5px 0.5px rgba(0,0,0,0.12);"></div><div style="position:absolute;left:1348.30px;top:179.68px;font-size:8.4px;line-height:8.4px;color:#1f1f1f;font-weight:normal;white-space:pre;">FixTMR</div><div style="position:absolute;left:1336.30px;top:193.50px;width:7.60px;height:7.61px;background:#ffffff;border-radius:1.5px;box-shadow:0 0 0 0.5px #c2c2c2, 0 0.5px 0.5px rgba(0,0,0,0.12);"></div><div style="position:absolute;left:1348.30px;top:193.20px;font-size:8.4px;line-height:8.4px;color:#1f1f1f;font-weight:normal;white-space:pre;">AddPNLF</div><div style="position:absolute;left:1393.30px;top:179.98px;width:7.60px;height:7.61px;background:#ffffff;border-radius:1.5px;box-shadow:0 0 0 0.5px #c2c2c2, 0 0.5px 0.5px rgba(0,0,0,0.12);"></div><div style="position:absolute;left:1404.50px;top:179.68px;font-size:8.4px;line-height:8.4px;color:#1f1f1f;font-weight:normal;white-space:pre;">AddIMEI</div><div style="position:absolute;left:1393.30px;top:193.50px;width:7.60px;height:7.61px;background:#ffffff;border-radius:1.5px;box-shadow:0 0 0 0.5px #c2c2c2, 0 0.5px 0.5px rgba(0,0,0,0.12);"></div><div style="position:absolute;left:1404.50px;top:193.20px;font-size:8.4px;line-height:8.4px;color:#1f1f1f;font-weight:normal;white-space:pre;">FixS3D</div><div style="position:absolute;left:1444.50px;top:179.98px;width:7.60px;height:7.61px;background:#ffffff;border-radius:1.5px;box-shadow:0 0 0 0.5px #c2c2c2, 0 0.5px 0.5px rgba(0,0,0,0.12);"></div><div style="position:absolute;left:1456.50px;top:179.68px;font-size:8.4px;line-height:8.4px;color:#1f1f1f;font-weight:normal;white-space:pre;">FixIntelGfx</div><div style="position:absolute;left:1444.50px;top:193.50px;width:7.60px;height:7.61px;background:#ffffff;border-radius:1.5px;box-shadow:0 0 0 0.5px #c2c2c2, 0 0.5px 0.5px rgba(0,0,0,0.12);"></div><div style="position:absolute;left:1456.50px;top:193.20px;font-size:8.4px;line-height:8.4px;color:#1f1f1f;font-weight:normal;white-space:pre;">FixACST</div><div style="position:absolute;left:1505.80px;top:179.98px;width:7.60px;height:7.61px;background:#ffffff;border-radius:1.5px;box-shadow:0 0 0 0.5px #c2c2c2, 0 0.5px 0.5px rgba(0,0,0,0.12);"></div><div style="position:absolute;left:1517.50px;top:179.68px;font-size:8.4px;line-height:8.4px;color:#1f1f1f;font-weight:normal;white-space:pre;">FixWAK</div><div style="position:absolute;left:1505.80px;top:193.50px;width:7.60px;height:7.61px;background:#ffffff;border-radius:1.5px;box-shadow:0 0 0 0.5px #c2c2c2, 0 0.5px 0.5px rgba(0,0,0,0.12);"></div><div style="position:absolute;left:1517.50px;top:193.20px;font-size:8.4px;line-height:8.4px;color:#1f1f1f;font-weight:normal;white-space:pre;">AddHDMI</div><div style="position:absolute;left:1192.00px;top:200.86px;width:63.30px;height:17.12px;border:2px solid #fb2e10;box-sizing:border-box;"></div><div style="position:absolute;left:1255.30px;top:186.64px;width:79.60px;height:16.82px;border:2px solid #fb2e10;box-sizing:border-box;"></div><div style="position:absolute;left:1257.10px;top:203.46px;width:76.00px;height:16.92px;border:2px solid #fb2e10;box-sizing:border-box;"></div><div style="position:absolute;left:1405.00px;top:219.53px;width:44.00px;height:14.22px;background:#fff;border-radius:3px;box-shadow:0 0 0 0.5px #bdbdbd, 0 0.5px 1px rgba(0,0,0,0.15);"></div><div style="position:absolute;left:1425.50px;top:219.53px;width:0.70px;height:14.22px;background:#d0d0d0;"></div><div style="position:absolute;left:1426.00px;top:219.53px;width:23.00px;height:14.22px;background:linear-gradient(#3d95fb,#1a78f2);border-radius:0 3px 3px 0;"></div><div style="position:absolute;left:1137.50px;width:600px;text-align:center;top:222.35px;font-size:9.2px;line-height:9.2px;color:#fff;font-weight:normal;white-space:pre;">2</div><div style="position:absolute;left:1115.40px;width:600px;text-align:center;top:222.35px;font-size:9.2px;line-height:9.2px;color:#222;font-weight:normal;white-space:pre;">1</div><div style="position:absolute;left:1668.00px;top:175.97px;width:227.75px;height:87.37px;background:#cbcbcb;border-radius:4px;box-shadow:inset 0 0 0 0.5px rgba(0,0,0,0.05);"></div><div style="position:absolute;left:1680.00px;top:167.56px;width:8.20px;height:8.21px;background:#ffffff;border-radius:1.5px;box-shadow:0 0 0 0.5px #c2c2c2, 0 0.5px 0.5px rgba(0,0,0,0.12);"></div><div style="position:absolute;left:1692.00px;top:167.61px;font-size:8.3px;line-height:8.3px;color:#1f1f1f;font-weight:normal;white-space:pre;">Drop OEM _DSM</div><div style="position:absolute;left:1683.20px;top:187.99px;width:8.20px;height:8.21px;background:#ffffff;border-radius:1.5px;box-shadow:0 0 0 0.5px #c2c2c2, 0 0.5px 0.5px rgba(0,0,0,0.12);"></div><div style="position:absolute;left:1695.00px;top:187.97px;font-size:8.45px;line-height:8.45px;color:#1f1f1f;font-weight:normal;white-space:pre;">ATI</div><div style="position:absolute;left:1683.20px;top:207.32px;width:8.20px;height:8.21px;background:#ffffff;border-radius:1.5px;box-shadow:0 0 0 0.5px #c2c2c2, 0 0.5px 0.5px rgba(0,0,0,0.12);"></div><div style="position:absolute;left:1695.00px;top:207.29px;font-size:8.45px;line-height:8.45px;color:#1f1f1f;font-weight:normal;white-space:pre;">HDMI</div><div style="position:absolute;left:1683.20px;top:226.54px;width:8.20px;height:8.21px;background:#ffffff;border-radius:1.5px;box-shadow:0 0 0 0.5px #c2c2c2, 0 0.5px 0.5px rgba(0,0,0,0.12);"></div><div style="position:absolute;left:1695.00px;top:226.52px;font-size:8.45px;line-height:8.45px;color:#1f1f1f;font-weight:normal;white-space:pre;">USB</div><div style="position:absolute;left:1683.20px;top:245.87px;width:8.20px;height:8.21px;background:#ffffff;border-radius:1.5px;box-shadow:0 0 0 0.5px #c2c2c2, 0 0.5px 0.5px rgba(0,0,0,0.12);"></div><div style="position:absolute;left:1695.00px;top:245.84px;font-size:8.45px;line-height:8.45px;color:#1f1f1f;font-weight:normal;white-space:pre;">LPC</div><div style="position:absolute;left:1726.60px;top:187.39px;width:8.20px;height:8.21px;background:#ffffff;border-radius:1.5px;box-shadow:0 0 0 0.5px #c2c2c2, 0 0.5px 0.5px rgba(0,0,0,0.12);"></div><div style="position:absolute;left:1738.00px;top:187.37px;font-size:8.45px;line-height:8.45px;color:#1f1f1f;font-weight:normal;white-space:pre;">IntelGFX</div><div style="position:absolute;left:1726.60px;top:206.71px;width:8.20px;height:8.21px;background:#ffffff;border-radius:1.5px;box-shadow:0 0 0 0.5px #c2c2c2, 0 0.5px 0.5px rgba(0,0,0,0.12);"></div><div style="position:absolute;left:1738.00px;top:206.69px;font-size:8.45px;line-height:8.45px;color:#1f1f1f;font-weight:normal;white-space:pre;">LAN</div><div style="position:absolute;left:1726.60px;top:225.94px;width:8.20px;height:8.21px;background:#ffffff;border-radius:1.5px;box-shadow:0 0 0 0.5px #c2c2c2, 0 0.5px 0.5px rgba(0,0,0,0.12);"></div><div style="position:absolute;left:1738.00px;top:225.92px;font-size:8.45px;line-height:8.45px;color:#1f1f1f;font-weight:normal;white-space:pre;">Firewire</div><div style="position:absolute;left:1726.60px;top:245.27px;width:8.20px;height:8.21px;background:#ffffff;border-radius:1.5px;box-shadow:0 0 0 0.5px #c2c2c2, 0 0.5px 0.5px rgba(0,0,0,0.12);"></div><div style="position:absolute;left:1738.00px;top:245.24px;font-size:8.45px;line-height:8.45px;color:#1f1f1f;font-weight:normal;white-space:pre;">SmBUS</div><div style="position:absolute;left:1783.00px;top:187.39px;width:8.20px;height:8.21px;background:#ffffff;border-radius:1.5px;box-shadow:0 0 0 0.5px #c2c2c2, 0 0.5px 0.5px rgba(0,0,0,0.12);"></div><div style="position:absolute;left:1794.50px;top:187.37px;font-size:8.45px;line-height:8.45px;color:#1f1f1f;font-weight:normal;white-space:pre;">NVidia</div><div style="position:absolute;left:1783.00px;top:206.71px;width:8.20px;height:8.21px;background:#ffffff;border-radius:1.5px;box-shadow:0 0 0 0.5px #c2c2c2, 0 0.5px 0.5px rgba(0,0,0,0.12);"></div><div style="position:absolute;left:1794.50px;top:206.69px;font-size:8.45px;line-height:8.45px;color:#1f1f1f;font-weight:normal;white-space:pre;">WIFI</div><div style="position:absolute;left:1783.00px;top:225.94px;width:8.20px;height:8.21px;background:#ffffff;border-radius:1.5px;box-shadow:0 0 0 0.5px #c2c2c2, 0 0.5px 0.5px rgba(0,0,0,0.12);"></div><div style="position:absolute;left:1794.50px;top:225.92px;font-size:8.45px;line-height:8.45px;color:#1f1f1f;font-weight:normal;white-space:pre;">IDE</div><div style="position:absolute;left:1832.00px;top:187.39px;width:8.20px;height:8.21px;background:#ffffff;border-radius:1.5px;box-shadow:0 0 0 0.5px #c2c2c2, 0 0.5px 0.5px rgba(0,0,0,0.12);"></div><div style="position:absolute;left:1843.80px;top:187.37px;font-size:8.45px;line-height:8.45px;color:#1f1f1f;font-weight:normal;white-space:pre;">HDA</div><div style="position:absolute;left:1832.00px;top:225.94px;width:8.20px;height:8.21px;background:#ffffff;border-radius:1.5px;box-shadow:0 0 0 0.5px #c2c2c2, 0 0.5px 0.5px rgba(0,0,0,0.12);"></div><div style="position:absolute;left:1843.80px;top:225.92px;font-size:8.45px;line-height:8.45px;color:#1f1f1f;font-weight:normal;white-space:pre;">SATA</div><div style="position:absolute;left:1191.80px;top:251.07px;width:9.40px;height:9.41px;background:#ffffff;border-radius:1.5px;box-shadow:0 0 0 0.5px #c2c2c2, 0 0.5px 0.5px rgba(0,0,0,0.12);"></div><div style="position:absolute;left:1204.50px;top:251.02px;font-size:9.75px;line-height:9.75px;color:#262626;font-weight:normal;white-space:pre;">Debug</div><div style="position:absolute;left:1265.00px;top:251.07px;width:9.40px;height:9.41px;background:#ffffff;border-radius:1.5px;box-shadow:0 0 0 0.5px #c2c2c2, 0 0.5px 0.5px rgba(0,0,0,0.12);"></div><div style="position:absolute;left:1277.80px;top:251.02px;font-size:9.75px;line-height:9.75px;color:#262626;font-weight:normal;white-space:pre;">Rtc8Allowed</div><div style="position:absolute;left:1191.80px;top:265.99px;width:9.40px;height:9.41px;background:#ffffff;border-radius:1.5px;box-shadow:0 0 0 0.5px #c2c2c2, 0 0.5px 0.5px rgba(0,0,0,0.12);"></div><div style="position:absolute;left:1204.50px;top:265.94px;font-size:9.75px;line-height:9.75px;color:#262626;font-weight:normal;white-space:pre;">ReuseFFFF</div><div style="position:absolute;left:1265.00px;top:265.99px;width:9.40px;height:9.41px;background:#ffffff;border-radius:1.5px;box-shadow:0 0 0 0.5px #c2c2c2, 0 0.5px 0.5px rgba(0,0,0,0.12);"></div><div style="position:absolute;left:1277.80px;top:265.94px;font-size:9.75px;line-height:9.75px;color:#262626;font-weight:normal;white-space:pre;">SlpSmiAtWake</div><div style="position:absolute;left:1191.80px;top:281.11px;width:9.40px;height:9.41px;background:#ffffff;border-radius:1.5px;box-shadow:0 0 0 0.5px #c2c2c2, 0 0.5px 0.5px rgba(0,0,0,0.12);"></div><div style="position:absolute;left:1204.50px;top:281.06px;font-size:9.75px;line-height:9.75px;color:#262626;font-weight:normal;white-space:pre;">SuspendOverride</div><div style="position:absolute;left:1389.50px;top:258.38px;width:145.50px;height:12.02px;background:#fff;box-shadow:0 0 0 0.5px #c8c8c8;"></div><div style="position:absolute;left:1439.50px;top:274.26px;font-size:8.5px;line-height:8.5px;color:#262626;font-weight:normal;white-space:pre;">DSDT name</div><div style="position:absolute;left:1195.00px;top:302.65px;font-size:8.6px;line-height:8.6px;color:#1f1f1f;font-weight:normal;white-space:pre;">Drop Tables</div><div style="position:absolute;left:1187.00px;top:311.85px;width:274.50px;height:87.92px;background:#d2d2d2;border-radius:4px;box-shadow:inset 0 0 0 0.5px rgba(0,0,0,0.05);"></div><div style="position:absolute;left:1190.75px;top:316.66px;width:255.50px;height:77.40px;background:#fff;"></div><div style="position:absolute;left:1190.75px;top:316.66px;width:255.50px;height:16.77px;background:#f4f4f4;border-bottom:1px solid #d6d6d6;box-sizing:border-box;"></div><div style="position:absolute;left:1241.25px;top:318.16px;width:1.00px;height:13.52px;background:#dedede;"></div><div style="position:absolute;left:1305.25px;top:318.16px;width:1.00px;height:13.52px;background:#dedede;"></div><div style="position:absolute;left:1194.00px;top:320.77px;font-size:8.6px;line-height:8.6px;color:#2e2e2e;font-weight:normal;white-space:pre;">Signature*</div><div style="position:absolute;left:1245.30px;top:320.77px;font-size:8.6px;line-height:8.6px;color:#2e2e2e;font-weight:normal;white-space:pre;">Typ/Key</div><div style="position:absolute;left:1308.30px;top:320.62px;font-size:8.9px;line-height:8.9px;color:#2e2e2e;font-weight:normal;white-space:pre;">String[TableId]/Nummer[Länge]</div><div style="position:absolute;left:1190.75px;top:333.43px;width:255.50px;height:9.76px;background:#dcdcdc;"></div><div style="position:absolute;left:1190.75px;top:343.19px;width:255.50px;height:9.76px;background:#f4f5f5;"></div><div style="position:absolute;left:1190.75px;top:352.96px;width:255.50px;height:9.76px;background:#ffffff;"></div><div style="position:absolute;left:1190.75px;top:362.72px;width:255.50px;height:9.76px;background:#f4f5f5;"></div><div style="position:absolute;left:1190.75px;top:372.48px;width:255.50px;height:9.76px;background:#ffffff;"></div><div style="position:absolute;left:1190.75px;top:382.25px;width:255.50px;height:9.76px;background:#f4f5f5;"></div><div style="position:absolute;left:1193.50px;top:335.19px;font-size:8.6px;line-height:8.6px;color:#1c1c1c;font-weight:normal;white-space:pre;">DMAR</div><svg style="position:absolute;left:1229.00px;top:333.98px;overflow:visible" width="5" height="8.4" viewBox="0 0 5 8.4"><path d="M0.7 3.1L2.5 0.7L4.3 3.1M0.7 4.9L2.5 7.3L4.3 4.9" fill="none" stroke="#3c3c3c" stroke-width="1"/></svg><svg style="position:absolute;left:1293.30px;top:333.98px;overflow:visible" width="5" height="8.4" viewBox="0 0 5 8.4"><path d="M0.7 3.1L2.5 0.7L4.3 3.1M0.7 4.9L2.5 7.3L4.3 4.9" fill="none" stroke="#3c3c3c" stroke-width="1"/></svg><svg style="position:absolute;left:1433.00px;top:333.98px;overflow:visible" width="5" height="8.4" viewBox="0 0 5 8.4"><path d="M0.7 3.1L2.5 0.7L4.3 3.1M0.7 4.9L2.5 7.3L4.3 4.9" fill="none" stroke="#a8a8a8" stroke-width="1"/></svg><div style="position:absolute;left:1449.30px;top:373.63px;width:8.60px;height:1.00px;background:#8c8c8c;"></div><div style="position:absolute;left:1449.30px;top:386.45px;width:8.60px;height:1.00px;background:#858585;"></div><div style="position:absolute;left:1453.10px;top:382.95px;width:1.00px;height:7.81px;background:#858585;"></div><div style="position:absolute;left:1475.80px;top:302.65px;font-size:8.6px;line-height:8.6px;color:#1f1f1f;font-weight:normal;white-space:pre;">SSDT</div><div style="position:absolute;left:1468.25px;top:311.85px;width:431.25px;height:84.66px;background:#d2d2d2;border-radius:4px;box-shadow:inset 0 0 0 0.5px rgba(0,0,0,0.05);"></div><div style="position:absolute;left:1472.80px;top:316.16px;width:7.60px;height:7.61px;background:#ffffff;border-radius:1.5px;box-shadow:0 0 0 0.5px #c2c2c2, 0 0.5px 0.5px rgba(0,0,0,0.12);"></div><div style="position:absolute;left:1484.50px;top:315.76px;font-size:8.6px;line-height:8.6px;color:#1f1f1f;font-weight:normal;white-space:pre;">Double First State</div><div style="position:absolute;left:1562.00px;top:316.16px;width:7.60px;height:7.61px;background:#ffffff;border-radius:1.5px;box-shadow:0 0 0 0.5px #c2c2c2, 0 0.5px 0.5px rgba(0,0,0,0.12);"></div><div style="position:absolute;left:1574.00px;top:315.76px;font-size:8.6px;line-height:8.6px;color:#1f1f1f;font-weight:normal;white-space:pre;">Drop OEM</div><div style="position:absolute;left:1620.80px;top:316.16px;width:7.60px;height:7.61px;background:#ffffff;border-radius:1.5px;box-shadow:0 0 0 0.5px #c2c2c2, 0 0.5px 0.5px rgba(0,0,0,0.12);"></div><div style="position:absolute;left:1632.50px;top:315.76px;font-size:8.6px;line-height:8.6px;color:#1f1f1f;font-weight:normal;white-space:pre;">Use SystemIO</div><div style="position:absolute;left:1694.50px;top:316.16px;width:7.60px;height:7.61px;background:#ffffff;border-radius:1.5px;box-shadow:0 0 0 0.5px #c2c2c2, 0 0.5px 0.5px rgba(0,0,0,0.12);"></div><div style="position:absolute;left:1706.30px;top:315.76px;font-size:8.6px;line-height:8.6px;color:#1f1f1f;font-weight:normal;white-space:pre;">NoOemTableId</div><div style="position:absolute;left:1472.80px;top:330.48px;width:7.60px;height:7.61px;background:#ffffff;border-radius:1.5px;box-shadow:0 0 0 0.5px #c2c2c2, 0 0.5px 0.5px rgba(0,0,0,0.12);"></div><div style="position:absolute;left:1484.50px;top:330.08px;font-size:8.6px;line-height:8.6px;color:#1f1f1f;font-weight:normal;white-space:pre;">NoDynamicExtract</div><div style="position:absolute;left:1472.50px;top:347.71px;font-size:8.6px;line-height:8.6px;color:#1f1f1f;font-weight:normal;white-space:pre;">Plugin Type</div><div style="position:absolute;left:1521.50px;top:345.20px;width:24.80px;height:12.52px;background:#fff;border-radius:2.5px;box-shadow:0 0 0 0.5px #c0c0c0, 0 0.5px 0.8px rgba(0,0,0,0.15);"></div><div style="position:absolute;left:1536.80px;top:345.20px;width:9.50px;height:12.52px;background:linear-gradient(#3d95fb,#1a78f2);border-radius:0 2.5px 2.5px 0;"></div><svg style="position:absolute;left:1538.30px;top:348.70px;overflow:visible" width="6.5" height="6" viewBox="0 0 6.5 6"><path d="M1.5 1.8L3.25 3.6L5 1.8" fill="none" stroke="#fff" stroke-width="1"/></svg><div style="position:absolute;left:1552.00px;top:347.71px;font-size:8.6px;line-height:8.6px;color:#1f1f1f;font-weight:normal;white-space:pre;">PLimit Dict</div><div style="position:absolute;left:1598.50px;top:345.20px;width:24.00px;height:12.52px;background:#fff;border-radius:2.5px;box-shadow:0 0 0 0.5px #c0c0c0, 0 0.5px 0.8px rgba(0,0,0,0.15);"></div><div style="position:absolute;left:1613.00px;top:345.20px;width:9.50px;height:12.52px;background:linear-gradient(#3d95fb,#1a78f2);border-radius:0 2.5px 2.5px 0;"></div><svg style="position:absolute;left:1614.50px;top:348.70px;overflow:visible" width="6.5" height="6" viewBox="0 0 6.5 6"><path d="M1.5 1.8L3.25 3.6L5 1.8" fill="none" stroke="#fff" stroke-width="1"/></svg><div style="position:absolute;left:1628.50px;top:347.71px;font-size:8.6px;line-height:8.6px;color:#1f1f1f;font-weight:normal;white-space:pre;">UnderVolt Step</div><div style="position:absolute;left:1691.50px;top:345.20px;width:24.80px;height:12.52px;background:#fff;border-radius:2.5px;box-shadow:0 0 0 0.5px #c0c0c0, 0 0.5px 0.8px rgba(0,0,0,0.15);"></div><div style="position:absolute;left:1706.80px;top:345.20px;width:9.50px;height:12.52px;background:linear-gradient(#3d95fb,#1a78f2);border-radius:0 2.5px 2.5px 0;"></div><svg style="position:absolute;left:1708.30px;top:348.70px;overflow:visible" width="6.5" height="6" viewBox="0 0 6.5 6"><path d="M1.5 1.8L3.25 3.6L5 1.8" fill="none" stroke="#fff" stroke-width="1"/></svg><div style="position:absolute;left:1472.50px;top:366.33px;font-size:8.6px;line-height:8.6px;color:#1f1f1f;font-weight:normal;white-space:pre;">Min Multiplier</div><div style="position:absolute;left:1528.50px;top:364.02px;width:24.00px;height:13.22px;background:#fff;box-shadow:0 0 0 0.5px #c8c8c8;"></div><div style="position:absolute;left:1559.50px;top:366.33px;font-size:8.6px;line-height:8.6px;color:#1f1f1f;font-weight:normal;white-space:pre;">Max Multiplier</div><div style="position:absolute;left:1617.50px;top:364.02px;width:24.50px;height:13.22px;background:#fff;box-shadow:0 0 0 0.5px #c8c8c8;"></div><div style="position:absolute;left:1648.30px;top:366.33px;font-size:8.6px;line-height:8.6px;color:#1f1f1f;font-weight:normal;white-space:pre;">C3 Latency</div><div style="position:absolute;left:1696.30px;top:364.02px;width:85.20px;height:13.22px;background:#fff;box-shadow:0 0 0 0.5px #c8c8c8;"></div><div style="position:absolute;left:1699.00px;top:366.71px;font-size:8.65px;line-height:8.65px;color:#bdbdbd;font-weight:normal;white-space:pre;">hex oder Nummer</div><div style="position:absolute;left:1472.80px;top:385.25px;width:7.60px;height:7.61px;background:#ffffff;border-radius:1.5px;box-shadow:0 0 0 0.5px #c2c2c2, 0 0.5px 0.5px rgba(0,0,0,0.12);"></div><div style="position:absolute;left:1484.50px;top:384.85px;font-size:8.6px;line-height:8.6px;color:#1f1f1f;font-weight:normal;white-space:pre;">EnableC2</div><div style="position:absolute;left:1528.50px;top:385.25px;width:7.60px;height:7.61px;background:#ffffff;border-radius:1.5px;box-shadow:0 0 0 0.5px #c2c2c2, 0 0.5px 0.5px rgba(0,0,0,0.12);"></div><div style="position:absolute;left:1540.30px;top:384.85px;font-size:8.6px;line-height:8.6px;color:#1f1f1f;font-weight:normal;white-space:pre;">EnableC4</div><div style="position:absolute;left:1585.00px;top:385.25px;width:7.60px;height:7.61px;background:#ffffff;border-radius:1.5px;box-shadow:0 0 0 0.5px #c2c2c2, 0 0.5px 0.5px rgba(0,0,0,0.12);"></div><div style="position:absolute;left:1597.00px;top:384.85px;font-size:8.6px;line-height:8.6px;color:#1f1f1f;font-weight:normal;white-space:pre;">EnableC6</div><div style="position:absolute;left:1641.50px;top:385.25px;width:7.60px;height:7.61px;background:#ffffff;border-radius:1.5px;box-shadow:0 0 0 0.5px #c2c2c2, 0 0.5px 0.5px rgba(0,0,0,0.12);"></div><div style="position:absolute;left:1653.30px;top:384.85px;font-size:8.6px;line-height:8.6px;color:#1f1f1f;font-weight:normal;white-space:pre;">EnableC7</div><div style="position:absolute;left:1796.30px;top:315.11px;font-size:8.5px;line-height:8.5px;color:#1f1f1f;font-weight:normal;white-space:pre;">Generate Options</div><div style="position:absolute;left:1788.25px;top:324.67px;width:106.25px;height:66.34px;background:#cbcbcb;border-radius:4px;box-shadow:inset 0 0 0 0.5px rgba(0,0,0,0.05);"></div><div style="position:absolute;left:1792.00px;top:327.97px;width:7.60px;height:7.61px;background:#ffffff;border-radius:1.5px;box-shadow:0 0 0 0.5px #c2c2c2, 0 0.5px 0.5px rgba(0,0,0,0.12);"></div><div style="position:absolute;left:1804.50px;top:327.63px;font-size:8.5px;line-height:8.5px;color:#1f1f1f;font-weight:normal;white-space:pre;">Generate PStates</div><div style="position:absolute;left:1792.00px;top:340.64px;width:7.60px;height:7.61px;background:#ffffff;border-radius:1.5px;box-shadow:0 0 0 0.5px #c2c2c2, 0 0.5px 0.5px rgba(0,0,0,0.12);"></div><div style="position:absolute;left:1804.50px;top:340.29px;font-size:8.5px;line-height:8.5px;color:#1f1f1f;font-weight:normal;white-space:pre;">Generate CStates</div><div style="position:absolute;left:1792.00px;top:353.31px;width:7.60px;height:7.61px;background:#ffffff;border-radius:1.5px;box-shadow:0 0 0 0.5px #c2c2c2, 0 0.5px 0.5px rgba(0,0,0,0.12);"></div><div style="position:absolute;left:1804.50px;top:352.96px;font-size:8.5px;line-height:8.5px;color:#1f1f1f;font-weight:normal;white-space:pre;">APSN</div><div style="position:absolute;left:1792.00px;top:365.97px;width:7.60px;height:7.61px;background:#ffffff;border-radius:1.5px;box-shadow:0 0 0 0.5px #c2c2c2, 0 0.5px 0.5px rgba(0,0,0,0.12);"></div><div style="position:absolute;left:1804.50px;top:365.63px;font-size:8.5px;line-height:8.5px;color:#1f1f1f;font-weight:normal;white-space:pre;">APLF</div><div style="position:absolute;left:1792.00px;top:378.64px;width:7.60px;height:7.61px;background:#2b82f6;border-radius:1.8px;box-shadow:0 0 0 0.5px #1f6fe0;"></div><svg style="position:absolute;left:1792.00px;top:378.64px;overflow:visible" width="7.6" height="7.6" viewBox="0 0 7.6 7.6"><path d="M1.67 3.95L3.19 5.62L6.08 1.82" fill="none" stroke="#fff" stroke-width="1.2"/></svg><div style="position:absolute;left:1804.50px;top:378.29px;font-size:8.5px;line-height:8.5px;color:#1f1f1f;font-weight:normal;white-space:pre;">PluginType</div><div style="position:absolute;left:1187.00px;top:405.78px;width:274.50px;height:62.08px;background:#d2d2d2;border-radius:4px;box-shadow:inset 0 0 0 0.5px rgba(0,0,0,0.05);"></div><div style="position:absolute;left:1191.30px;top:411.28px;width:7.60px;height:7.61px;background:#ffffff;border-radius:1.5px;box-shadow:0 0 0 0.5px #c2c2c2, 0 0.5px 0.5px rgba(0,0,0,0.12);"></div><div style="position:absolute;left:1203.30px;top:410.96px;font-size:8.45px;line-height:8.45px;color:#1f1f1f;font-weight:normal;white-space:pre;">Patch APIC</div><div style="position:absolute;left:1253.80px;top:411.28px;width:7.60px;height:7.61px;background:#ffffff;border-radius:1.5px;box-shadow:0 0 0 0.5px #c2c2c2, 0 0.5px 0.5px rgba(0,0,0,0.12);"></div><div style="position:absolute;left:1265.50px;top:410.96px;font-size:8.45px;line-height:8.45px;color:#1f1f1f;font-weight:normal;white-space:pre;">Smart UPS</div><div style="position:absolute;left:1314.50px;top:411.28px;width:7.60px;height:7.61px;background:#ffffff;border-radius:1.5px;box-shadow:0 0 0 0.5px #c2c2c2, 0 0.5px 0.5px rgba(0,0,0,0.12);"></div><div style="position:absolute;left:1326.50px;top:410.96px;font-size:8.45px;line-height:8.45px;color:#1f1f1f;font-weight:normal;white-space:pre;">Halt Enabler</div><div style="position:absolute;left:1191.30px;top:426.80px;width:7.60px;height:7.61px;background:#ffffff;border-radius:1.5px;box-shadow:0 0 0 0.5px #c2c2c2, 0 0.5px 0.5px rgba(0,0,0,0.12);"></div><div style="position:absolute;left:1203.30px;top:426.48px;font-size:8.45px;line-height:8.45px;color:#1f1f1f;font-weight:normal;white-space:pre;">AutoMerge</div><div style="position:absolute;left:1252.80px;top:426.80px;width:7.60px;height:7.61px;background:#ffffff;border-radius:1.5px;box-shadow:0 0 0 0.5px #c2c2c2, 0 0.5px 0.5px rgba(0,0,0,0.12);"></div><div style="position:absolute;left:1264.50px;top:426.48px;font-size:8.45px;line-height:8.45px;color:#1f1f1f;font-weight:normal;white-space:pre;">FixHeaders</div><div style="position:absolute;left:1315.30px;top:426.80px;width:7.60px;height:7.61px;background:#ffffff;border-radius:1.5px;box-shadow:0 0 0 0.5px #c2c2c2, 0 0.5px 0.5px rgba(0,0,0,0.12);"></div><div style="position:absolute;left:1327.00px;top:426.48px;font-size:8.45px;line-height:8.45px;color:#1f1f1f;font-weight:normal;white-space:pre;">FixMCFG</div><div style="position:absolute;left:1369.50px;top:426.80px;width:7.60px;height:7.61px;background:#ffffff;border-radius:1.5px;box-shadow:0 0 0 0.5px #c2c2c2, 0 0.5px 0.5px rgba(0,0,0,0.12);"></div><div style="position:absolute;left:1381.50px;top:426.48px;font-size:8.45px;line-height:8.45px;color:#1f1f1f;font-weight:normal;white-space:pre;">DisableASPM</div><div style="position:absolute;left:1190.75px;top:438.32px;width:115.50px;height:15.02px;background:#fff;box-shadow:0 0 0 0.5px #c8c8c8;"></div><div style="position:absolute;left:1312.75px;top:438.32px;width:144.75px;height:15.02px;background:#fff;box-shadow:0 0 0 0.5px #c8c8c8;"></div><div style="position:absolute;left:948.30px;width:600px;text-align:center;top:441.75px;font-size:10px;line-height:10px;color:#c4c4c4;font-weight:normal;white-space:pre;">0x64</div><div style="position:absolute;left:1085.00px;width:600px;text-align:center;top:441.75px;font-size:10px;line-height:10px;color:#c4c4c4;font-weight:normal;white-space:pre;">0xFE</div><div style="position:absolute;left:948.30px;width:600px;text-align:center;top:454.85px;font-size:8.6px;line-height:8.6px;color:#262626;font-weight:normal;white-space:pre;">Reset Address</div><div style="position:absolute;left:1085.00px;width:600px;text-align:center;top:454.85px;font-size:8.6px;line-height:8.6px;color:#262626;font-weight:normal;white-space:pre;">Reset Value</div><div style="position:absolute;left:1475.80px;top:402.68px;font-size:8.6px;line-height:8.6px;color:#1f1f1f;font-weight:normal;white-space:pre;">DisabledAML</div><div style="position:absolute;left:1699.00px;top:402.68px;font-size:8.6px;line-height:8.6px;color:#1f1f1f;font-weight:normal;white-space:pre;">SortedOrder</div><div style="position:absolute;left:1468.25px;top:412.29px;width:208.75px;height:55.57px;background:#d2d2d2;border-radius:4px;box-shadow:inset 0 0 0 0.5px rgba(0,0,0,0.05);"></div><div style="position:absolute;left:1472.00px;top:415.29px;width:190.75px;height:12.42px;background:#ffffff;"></div><div style="position:absolute;left:1472.00px;top:427.71px;width:190.75px;height:12.42px;background:#f3f4f4;"></div><div style="position:absolute;left:1472.00px;top:440.12px;width:190.75px;height:12.42px;background:#ffffff;"></div><div style="position:absolute;left:1472.00px;top:452.54px;width:190.75px;height:12.32px;background:#f3f4f4;"></div><div style="position:absolute;left:1664.95px;top:447.73px;width:8.50px;height:1.00px;background:#8c8c8c;"></div><div style="position:absolute;left:1664.95px;top:458.75px;width:8.50px;height:1.00px;background:#858585;"></div><div style="position:absolute;left:1668.70px;top:455.24px;width:1.00px;height:8.31px;background:#858585;"></div><div style="position:absolute;left:1691.25px;top:412.29px;width:208.75px;height:55.57px;background:#d2d2d2;border-radius:4px;box-shadow:inset 0 0 0 0.5px rgba(0,0,0,0.05);"></div><div style="position:absolute;left:1695.00px;top:415.29px;width:190.75px;height:12.42px;background:#ffffff;"></div><div style="position:absolute;left:1695.00px;top:427.71px;width:190.75px;height:12.42px;background:#f3f4f4;"></div><div style="position:absolute;left:1695.00px;top:440.12px;width:190.75px;height:12.42px;background:#ffffff;"></div><div style="position:absolute;left:1695.00px;top:452.54px;width:190.75px;height:12.32px;background:#f3f4f4;"></div><div style="position:absolute;left:1887.95px;top:447.73px;width:8.50px;height:1.00px;background:#8c8c8c;"></div><div style="position:absolute;left:1887.95px;top:458.75px;width:8.50px;height:1.00px;background:#858585;"></div><div style="position:absolute;left:1891.70px;top:455.24px;width:1.00px;height:8.31px;background:#858585;"></div><div style="position:absolute;left:1174.00px;top:482.38px;width:740.00px;height:26.03px;background:linear-gradient(90deg,#d5d5d5,#dedede 40%,#e0e0e0);border-top:1px solid #d0d0d0;box-shadow:inset 0 1px 0 #ececec;border-radius:0 0 4px 0;box-sizing:border-box;"></div><svg style="position:absolute;left:1185.70px;top:491.49px;overflow:visible" width="10" height="10" viewBox="0 0 10 10"><path d="M5 0.6L9.6 4.6" stroke="#a77a4f" stroke-width="1.1" fill="none"/><path d="M5 0.6L0.4 4.6" stroke="#a77a4f" stroke-width="1.1" fill="none"/><path d="M1.6 4.4L5 1.5L8.4 4.4V9.5H1.6Z" fill="#f6f6f6" stroke="#c9c9c9" stroke-width="0.4"/><rect x="4.1" y="6.2" width="1.8" height="3.3" fill="#f08a12"/></svg><div style="position:absolute;left:1200.00px;top:491.44px;font-size:9.95px;line-height:9.95px;color:#6f6f6f;font-weight:normal;white-space:pre;transform:scaleX(1.0125);transform-origin:0 0;">gandalf</div><svg style="position:absolute;left:1238.50px;top:493.79px;overflow:visible" width="4" height="5" viewBox="0 0 4 5"><path d="M0.8 0.6L3 2.5L0.8 4.4" fill="none" stroke="#666" stroke-width="0.9"/></svg><svg style="position:absolute;left:1245.20px;top:491.69px;overflow:visible" width="12" height="10" viewBox="0 0 12 10"><path d="M0.5 1.2Q0.5 0.5 1.2 0.5H4.2L5.2 1.6H10.6Q11.3 1.6 11.3 2.3V8.6Q11.3 9.3 10.6 9.3H1.2Q0.5 9.3 0.5 8.6Z" fill="#6fcbfa"/><path d="M0.5 2.6H11.3" stroke="#8ad6fb" stroke-width="0.6"/><circle cx="5.9" cy="5.6" r="2.3" fill="none" stroke="#3b9fe0" stroke-width="0.9"/><path d="M5.9 4.2V6.6M4.9 5.7L5.9 6.7L6.9 5.7" fill="none" stroke="#3b9fe0" stroke-width="0.7"/></svg><div style="position:absolute;left:1260.00px;top:491.44px;font-size:9.95px;line-height:9.95px;color:#6f6f6f;font-weight:normal;white-space:pre;transform:scaleX(0.9995);transform-origin:0 0;">Downloads</div><svg style="position:absolute;left:1314.30px;top:493.79px;overflow:visible" width="4" height="5" viewBox="0 0 4 5"><path d="M0.8 0.6L3 2.5L0.8 4.4" fill="none" stroke="#666" stroke-width="0.9"/></svg><svg style="position:absolute;left:1321.20px;top:491.69px;overflow:visible" width="12" height="10" viewBox="0 0 12 10"><path d="M0.5 1.2Q0.5 0.5 1.2 0.5H4.2L5.2 1.6H10.6Q11.3 1.6 11.3 2.3V8.6Q11.3 9.3 10.6 9.3H1.2Q0.5 9.3 0.5 8.6Z" fill="#6fcbfa"/><path d="M0.5 2.6H11.3" stroke="#8ad6fb" stroke-width="0.6"/></svg><div style="position:absolute;left:1336.30px;top:491.44px;font-size:9.95px;line-height:9.95px;color:#6f6f6f;font-weight:normal;white-space:pre;transform:scaleX(0.9997);transform-origin:0 0;">EFI von Matze9605</div><svg style="position:absolute;left:1427.30px;top:493.79px;overflow:visible" width="4" height="5" viewBox="0 0 4 5"><path d="M0.8 0.6L3 2.5L0.8 4.4" fill="none" stroke="#666" stroke-width="0.9"/></svg><svg style="position:absolute;left:1433.80px;top:491.69px;overflow:visible" width="12" height="10" viewBox="0 0 12 10"><path d="M0.5 1.2Q0.5 0.5 1.2 0.5H4.2L5.2 1.6H10.6Q11.3 1.6 11.3 2.3V8.6Q11.3 9.3 10.6 9.3H1.2Q0.5 9.3 0.5 8.6Z" fill="#6fcbfa"/><path d="M0.5 2.6H11.3" stroke="#8ad6fb" stroke-width="0.6"/></svg><div style="position:absolute;left:1448.80px;top:491.44px;font-size:9.95px;line-height:9.95px;color:#6f6f6f;font-weight:normal;white-space:pre;transform:scaleX(0.8957);transform-origin:0 0;">CLOVER</div><svg style="position:absolute;left:1491.20px;top:493.79px;overflow:visible" width="4" height="5" viewBox="0 0 4 5"><path d="M0.8 0.6L3 2.5L0.8 4.4" fill="none" stroke="#666" stroke-width="0.9"/></svg><svg style="position:absolute;left:1500.00px;top:491.09px;overflow:visible" width="8" height="10.6" viewBox="0 0 8 10.6"><path d="M0.5 0.5H5.3L7.5 2.7V10.1H0.5Z" fill="#fafafa" stroke="#d0d0d0" stroke-width="0.5"/><path d="M2 5h4M2 6.5h4M2 8h4" stroke="#e2e2e2" stroke-width="0.6"/></svg><div style="position:absolute;left:1512.50px;top:491.44px;font-size:9.95px;line-height:9.95px;color:#6f6f6f;font-weight:normal;white-space:pre;transform:scaleX(1.0637);transform-origin:0 0;">config.plist</div><div style="position:absolute;left:1891.30px;top:491.89px;width:10.70px;height:1.00px;background:#8a8a8a;"></div><div style="position:absolute;left:1891.30px;top:493.99px;width:10.70px;height:1.00px;background:#b0b0b0;"></div><div style="position:absolute;left:1891.30px;top:496.10px;width:10.70px;height:1.00px;background:#8a8a8a;"></div><div style="position:absolute;left:1891.30px;top:498.30px;width:10.70px;height:1.00px;background:#8a8a8a;"></div><div style="position:absolute;left:963.00px;top:5.15px;width:951.00px;height:503.26px;box-shadow:inset 1px 0 0 rgba(210,210,210,0.28), inset -1px 0 0 rgba(210,210,210,0.28), inset 0 -1px 0 rgba(210,210,210,0.3);border-radius:5px 5px 4px 4px;"></div></div>
</body></html>
